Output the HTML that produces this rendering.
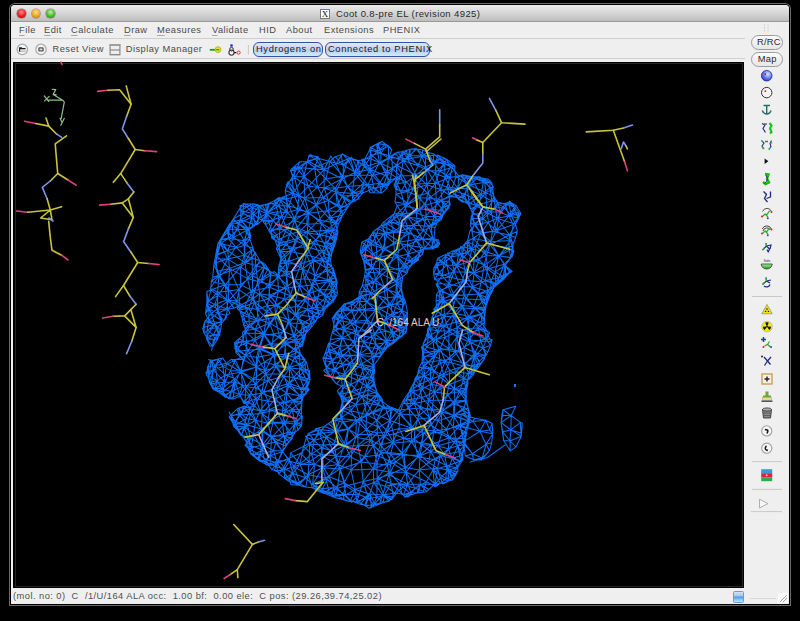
<!DOCTYPE html>
<html><head><meta charset="utf-8">
<style>
html,body{margin:0;padding:0;width:800px;height:621px;overflow:hidden;background:#000;}
body{position:relative;font-family:"Liberation Sans",sans-serif;}
.abs{position:absolute;}
#win{position:absolute;left:11px;top:5px;width:778px;height:599px;background:#efefef;border-radius:4px 4px 0 0;box-shadow:0 0 0 1px #000,0 0 0 2px #6a6a6a;overflow:hidden;}
#title{position:absolute;left:0;top:0;width:778px;height:16px;background:linear-gradient(#ebebeb,#d6d6d6 50%,#bdbdbd);border-bottom:1px solid #9a9a9a;}
.tl{position:absolute;top:4.1px;width:8.8px;height:8.8px;border-radius:50%;box-shadow:0 0 0 0.6px rgba(90,10,10,0.45);}
.txt{position:absolute;white-space:pre;font-size:9.3px;letter-spacing:0.45px;color:#4a4a4a;line-height:12px;}
.menu u{text-decoration:none;background:linear-gradient(#a8a8a8,#a8a8a8) no-repeat 0 100%/calc(100% - 0.45px) 1px;padding-bottom:1px;}
#gl{position:absolute;left:13px;top:61.6px;width:731px;height:526.2px;background:#000;}
.pill{position:absolute;border-radius:6px;border:1px solid #3652a8;background:linear-gradient(#e4e8f8,#c6d2f2 45%,#b4cdf0 55%,#cdeefc);box-sizing:border-box;box-shadow:0 1px 0 #e6e6e6;}
.gbtn{position:absolute;border-radius:8px;border:1px solid #9c9c9c;background:linear-gradient(#fbfbfb,#e6e6e6);box-sizing:border-box;}
</style></head>
<body>
<div id="win">
  <div id="title">
    <div class="tl" style="left:6.3px;background:radial-gradient(circle at 50% 35%,#ff8a8a,#e3141a 60%,#a70d10);"></div>
    <div class="tl" style="left:20.6px;background:radial-gradient(circle at 50% 35%,#ffe08a,#e8a316 60%,#b07010);"></div>
    <div class="tl" style="left:35.2px;background:radial-gradient(circle at 50% 35%,#b8f59a,#3db42a 60%,#267a18);"></div>
  </div>
</div>
<!-- title text -->
<div class="abs" style="left:320px;top:9px;width:10px;height:10px;background:#fff;border:1px solid #777;box-sizing:border-box;font-size:9px;line-height:8px;text-align:center;color:#111;font-family:'Liberation Serif',serif;">X</div>
<div class="txt" style="left:336px;top:7.7px;font-size:9.5px;letter-spacing:0.39px;color:#2a2a2a;">Coot 0.8-pre EL (revision 4925)</div>
<!-- menubar -->
<div class="abs" style="left:11px;top:38px;width:734px;height:1px;background:#cfcfcf;"></div>
<div class="txt menu" style="left:19px;top:24.4px;"><u>F</u>ile</div>
<div class="txt menu" style="left:44px;top:24.4px;"><u>E</u>dit</div>
<div class="txt menu" style="left:71px;top:24.4px;"><u>C</u>alculate</div>
<div class="txt menu" style="left:124px;top:24.4px;"><u>D</u>raw</div>
<div class="txt menu" style="left:157px;top:24.4px;"><u>M</u>easures</div>
<div class="txt menu" style="left:212px;top:24.4px;"><u>V</u>alidate</div>
<div class="txt menu" style="left:259px;top:24.4px;">HID</div>
<div class="txt menu" style="left:286px;top:24.4px;">About</div>
<div class="txt menu" style="left:324px;top:24.4px;">Extensions</div>
<div class="txt menu" style="left:383px;top:24.4px;">PHENIX</div>
<!-- toolbar -->
<!-- toolbar items -->
<svg class="abs" style="left:0;top:38px" width="250" height="22" viewBox="0 38 250 22">
 <g fill="none">
  <circle cx="22.3" cy="49.4" r="5.2" stroke="#a8a8a8" stroke-width="1.2" fill="#f4f4f4"/>
  <path d="M19 47.2h2.5l0.8 0.9h3.2v3.6h-6.5z" fill="#222"/>
  <path d="M20.2 49.2h5.8v2.6h-5.8z" fill="#ddd"/>
  <circle cx="41" cy="49.4" r="5.2" stroke="#a8a8a8" stroke-width="1.2" fill="#f4f4f4"/>
  <rect x="38.3" y="47.2" width="5.4" height="4.4" rx="1.2" fill="#555"/>
  <rect x="39.6" y="48.5" width="2.8" height="1.8" fill="#ddd"/>
  <rect x="109.5" y="44.2" width="11" height="11.2" fill="#8a8a8a"/>
  <rect x="110.7" y="45.8" width="8.6" height="3.6" fill="#eee"/>
  <rect x="110.7" y="50.6" width="8.6" height="3.4" fill="#eee"/>
  <rect x="109.5" y="44.2" width="11" height="1.6" fill="#a0a0a0"/>
  <path d="M209.8 49.8h5.5" stroke="#17a017" stroke-width="1.8"/>
  <circle cx="218" cy="49.6" r="2.9" fill="#e8e020" stroke="#b0a810" stroke-width="0.8"/>
  <path d="M216.2 49.7h3" stroke="#17a017" stroke-width="1.2"/>
  <rect x="230.3" y="44.4" width="2.4" height="2.2" fill="#1020e0"/>
  <circle cx="231.5" cy="49.2" r="1.8" stroke="#333" stroke-width="1"/>
  <circle cx="231.5" cy="52.6" r="2.6" stroke="#333" stroke-width="1.1"/>
  <path d="M234.2 52.6h2.2" stroke="#111" stroke-width="1.2"/>
  <circle cx="238.6" cy="52.6" r="1.6" stroke="#d33" stroke-width="1"/>
  <path d="M248.4 45v9.5" stroke="#c8c8c8" stroke-width="1"/>
 </g>
</svg>
<div class="txt" style="left:52.5px;top:43.2px;">Reset View</div>
<div class="txt" style="left:125.8px;top:43.2px;">Display Manager</div>
<div class="pill" style="left:253px;top:42px;width:70px;height:15px;"></div>
<div class="txt" style="left:256px;top:43.2px;color:#1a1a1a;letter-spacing:0.65px;">Hydrogens on</div>
<div class="pill" style="left:325px;top:42px;width:105px;height:15px;"></div>
<div class="txt" style="left:328px;top:43.2px;color:#1a1a1a;letter-spacing:0.65px;">Connected to PHENIX</div>

<div class="abs" style="left:11px;top:58px;width:734px;height:1px;background:#cfcfcf;"></div>
<div id="gl"></div>
<div class="abs" style="left:14.6px;top:62.8px;width:728.4px;height:524px;box-sizing:border-box;border:1px solid #242424;"></div>
<svg class="abs" style="left:0;top:0" width="800" height="621" viewBox="0 0 800 621"><g fill="none" stroke-linecap="round" stroke-linejoin="round"><path d="M287.5 385.5L284.1 376.3M401.6 288.8L401.5 288.0M423.2 343.7L422.4 354.1M402.4 213.8L398.7 222.6M263.7 333.8L245.6 332.9M427.1 409.4L441.3 412.1M366.9 386.3L374.6 386.3M227.7 250.6L229.5 268.4M292.8 473.4L297.2 483.8M423.9 248.8L432.9 249.0M344.0 387.4L340.2 394.2M426.5 481.7L423.3 491.3M468.6 421.0L463.0 410.0M457.8 188.3L467.3 188.6M444.0 262.9L437.3 259.3M350.6 355.6L353.6 365.6M432.9 249.0L439.8 244.4M464.4 443.1L462.1 455.3M472.5 286.8L487.9 291.4M450.5 359.3L443.7 375.6M299.9 344.2L303.8 337.7M442.1 275.8L444.0 262.9M498.9 256.1L510.5 240.5M326.0 247.3L334.3 241.6M406.0 472.1L389.7 472.3M311.8 285.1L302.8 268.9M275.7 204.8L274.4 200.6M461.8 247.3L464.3 247.0M380.9 153.3L391.5 156.5M406.0 472.1L390.7 461.8M466.4 401.4L463.0 410.0M309.2 389.8L307.3 386.8M235.4 382.3L240.0 396.2M252.5 298.8L238.8 289.6M401.9 494.1L405.8 497.1M366.0 429.9L355.8 437.3M401.9 453.8L414.2 438.9M362.6 396.0L350.6 410.8M446.8 465.9L445.9 478.6M287.4 212.4L275.7 204.8M218.4 359.4L222.9 366.4M472.5 286.8L466.1 298.9M443.7 375.6L439.9 360.4M217.6 292.2L228.4 290.9M255.8 265.5L261.7 261.8M330.4 339.4L342.7 337.9M432.4 238.6L423.9 248.8M214.7 324.2L204.8 321.5M217.6 308.9L207.2 303.4M432.0 247.2L432.9 249.0M370.9 244.5L362.8 246.2M362.6 396.0L377.0 392.1M303.6 446.3L290.6 452.9M371.1 265.6L379.3 272.9M246.5 230.5L233.5 237.4M253.6 433.9L244.0 426.7M213.3 369.9L225.1 382.3M291.0 251.6L289.0 261.3M246.0 418.6L233.6 426.3M240.5 371.1L246.2 386.5M314.7 297.6L311.8 285.1M459.0 451.8L460.7 461.0M399.4 414.1L418.7 415.2M370.1 169.2L371.4 154.9M487.9 291.4L487.7 298.2M322.4 488.8L324.8 492.0M328.8 348.6L329.8 344.8M401.6 310.5L404.6 317.2M209.9 381.6L212.4 388.2M246.7 342.8L238.9 338.8M344.0 387.4L351.9 391.8M402.8 276.7L407.1 273.0M240.9 412.9L246.0 418.6M397.6 256.4L399.9 242.0M364.5 456.8L373.3 469.0M491.0 211.9L479.2 204.5M324.2 188.1L308.4 186.3M380.2 226.5L378.4 228.6M343.9 408.1L340.7 418.4M401.9 494.1L399.6 483.8M287.0 272.0L302.8 268.9M269.5 231.9L279.9 228.1M298.4 347.2L302.9 344.0M399.4 414.1L403.3 403.4M277.3 246.8L275.3 240.4M480.7 232.9L472.0 231.4M415.8 239.4L408.2 227.9M238.6 429.8L241.7 435.3M377.8 307.9L367.5 302.2M373.4 401.5L382.2 399.1M323.2 466.7L322.8 456.4M359.5 354.8L347.8 347.3M442.2 290.8L436.7 283.6M515.4 212.5L508.9 216.0M504.1 264.3L511.0 257.4M241.7 435.3L245.9 440.9M483.9 329.1L469.8 332.2M358.8 309.7L370.9 323.3M435.3 183.3L427.4 170.4M245.6 332.9L245.0 328.1M460.7 461.0L462.1 455.3M277.7 211.7L275.7 204.8M207.2 303.4L211.2 313.5M331.4 281.1L337.3 282.3M299.3 484.3L297.2 483.8M257.8 281.4L263.8 267.9M399.6 483.8L415.1 488.2M269.6 295.2L267.2 305.4M518.9 216.6L519.0 212.8M499.9 211.9L505.1 203.9M286.8 199.0L287.4 212.4M292.3 408.9L302.0 401.0M380.9 153.3L369.7 149.7M252.5 298.8L247.5 278.6M380.9 153.3L386.5 145.2M441.3 412.1L428.7 400.4M318.1 156.8L308.9 155.5M430.8 384.2L434.5 371.1M452.1 476.3L452.3 480.0M371.4 154.9L364.4 160.1M401.9 453.8L403.9 438.3M326.0 247.3L330.5 255.4M318.6 310.8L318.4 316.3M295.4 300.9L295.6 314.6M484.5 299.9L487.7 298.2M414.3 403.5L428.7 400.4M265.8 220.6L265.5 224.6M456.1 440.7L464.4 443.1M289.8 234.2L279.3 239.3M439.3 242.9L439.8 244.4M483.3 218.7L471.7 218.2M295.1 432.5L301.3 426.3M436.5 202.0L447.1 187.0M259.1 210.6L263.2 221.8M462.1 254.8L469.2 261.8M271.0 343.7L285.6 344.1M437.6 311.6L438.9 303.5M252.5 298.8L239.5 305.7M402.4 213.8L408.0 204.0M473.3 238.6L467.3 241.1M336.1 163.9L342.4 153.9M448.9 331.2L457.5 327.5M377.8 307.9L358.8 309.7M226.1 309.6L228.5 300.6M304.0 359.8L306.4 362.2M376.9 419.9L387.5 431.7M417.2 375.8L418.9 371.9M343.9 304.0L346.6 303.2M301.0 368.9L306.9 381.2M276.3 366.4L265.4 370.8M322.5 259.2L326.0 247.3M244.9 262.6L244.7 245.2M360.4 296.0L352.5 301.3M430.9 425.2L415.0 429.1M385.4 298.1L391.4 305.6M485.5 251.5L498.9 256.1M481.1 314.6L484.5 319.1M399.8 337.0L392.7 343.9M386.5 342.5L388.0 345.1M430.8 384.2L443.7 375.6M324.2 188.1L342.2 178.8M284.5 354.4L285.6 344.1M387.0 233.5L383.0 248.5M493.6 187.3L490.0 182.3M408.3 254.0L413.2 260.8M466.4 401.4L454.9 401.0M297.5 209.8L287.4 212.4M306.9 224.3L294.7 220.8M483.9 329.1L476.3 323.9M343.1 327.3L355.8 330.7M305.7 477.8L297.2 483.8M354.8 172.8L358.1 160.5M370.9 244.5L368.0 239.2M383.9 285.9L379.3 272.9M225.1 382.3L222.9 366.4M454.8 194.3L456.2 197.3M415.1 488.2L423.3 491.3M348.3 400.8L362.6 396.0M282.7 451.7L270.5 455.6M401.5 288.0L401.7 284.5M358.6 380.7L363.7 368.6M250.3 408.7L246.0 418.6M292.8 473.4L284.8 468.5M213.6 389.5L212.4 388.2M308.3 369.6L309.2 375.2M343.1 327.3L338.2 320.4M427.6 329.1L428.7 336.1M430.9 425.2L418.7 415.2M255.8 265.5L263.8 267.9M264.1 391.3L267.8 401.0M474.4 370.6L468.8 373.6M414.3 403.5L407.2 398.7M237.0 429.6L238.6 429.8M404.2 299.7L402.9 295.7M279.3 239.3L275.3 240.4M217.6 308.9L228.5 300.6M363.1 259.9L361.4 254.9M372.6 254.3L365.2 248.8M369.7 494.0L357.0 503.0M211.7 383.6L212.4 388.2M380.3 444.9L377.3 432.9M375.9 344.3L381.8 353.6M333.6 487.4L324.8 492.0M218.0 338.6L218.3 333.9M292.3 408.9L283.6 402.5M421.3 250.1L408.3 254.0M282.7 451.7L289.5 461.1M325.3 309.3L328.3 302.6M371.3 505.3L379.6 503.4M271.4 272.2L263.8 267.9M373.7 282.8L368.4 272.3M315.1 275.5L310.3 263.0M287.6 432.5L271.5 437.5M292.8 473.4L289.5 461.1M289.5 461.1L290.6 452.9M385.3 331.2L386.5 342.5M351.0 470.0L373.3 469.0M314.7 297.6L305.3 300.6M204.3 327.3L204.1 333.3M442.1 275.8L449.3 284.2M514.5 207.0L505.1 203.9M277.8 305.6L295.6 314.6M238.4 223.3L233.5 237.4M359.5 354.8L350.6 355.6M282.7 451.7L278.5 460.4M434.2 216.4L425.5 205.2M475.3 308.7L462.6 307.9M421.7 156.1L422.8 149.9M259.1 210.6L266.9 213.4M486.5 339.1L469.8 332.2M217.6 308.9L211.2 313.5M474.5 223.3L472.0 231.4M366.9 386.3L377.0 392.1M433.0 469.8L445.9 478.6M292.8 473.4L289.7 479.4M295.6 314.6L305.3 300.6M418.1 184.1L417.2 195.7M392.6 168.8L400.5 176.1M435.3 183.3L436.5 202.0M489.9 187.9L491.9 201.0M455.9 371.4L454.3 389.4M423.3 230.6L431.4 226.6M404.6 317.2L407.5 312.9M273.0 220.2L277.7 211.7M260.0 410.7L255.8 398.9M373.4 401.5L383.3 407.2M418.1 184.1L427.7 193.3M319.0 427.7L308.8 433.4M310.3 323.9L313.2 322.2M399.6 483.8L395.1 493.0M260.0 410.7L267.8 401.0M340.5 208.3L335.9 192.1M232.0 224.1L233.5 237.4M231.1 416.2L229.2 412.0M421.3 250.1L422.7 254.0M253.3 378.9L256.2 367.2M292.3 408.9L285.2 423.1M294.7 220.8L297.5 209.8M299.0 195.7L297.5 209.8M335.3 315.5L334.5 318.6M289.0 261.3L302.8 268.9M220.4 240.3L233.5 237.4M486.5 339.1L483.0 347.9M313.8 243.5L322.5 259.2M421.7 156.1L433.4 162.0M332.7 229.9L336.1 225.3M454.2 415.2L453.4 427.0M266.9 213.4L265.4 204.4M245.6 355.5L256.2 367.2M485.5 251.5L490.8 241.7M301.0 368.9L304.0 359.8M443.7 375.6L434.5 371.1M285.9 288.2L295.4 300.9M486.5 339.1L490.5 345.5M364.4 160.1L358.1 160.5M363.2 183.3L354.8 172.8M333.6 487.4L344.1 482.7M479.4 176.7L471.3 176.5M508.3 202.8L505.1 203.9M387.5 431.7L380.3 444.9M508.9 216.0L514.5 207.0M427.4 170.4L439.7 171.0M209.9 381.6L211.7 383.6M303.8 395.0L302.0 401.0M291.0 251.6L281.9 259.9M421.3 250.1L413.2 260.8M402.8 276.7L401.7 284.5M340.7 418.4L340.1 410.4M288.8 481.2L297.2 483.8M358.8 309.7L367.5 302.2M407.1 273.0L407.4 271.3M271.5 437.5L270.5 455.6M380.2 226.5L383.1 222.7M376.9 419.9L392.4 408.5M319.3 234.8L321.6 223.6M300.8 354.2L298.4 347.2M366.5 240.7L362.8 246.2M474.0 356.8L464.7 363.5M269.6 295.2L284.0 298.8M255.1 254.4L253.0 248.2M401.6 310.5L404.2 299.7M244.9 262.6L255.1 254.4M418.1 184.1L427.4 170.4M362.8 246.2L361.4 254.9M287.6 432.5L283.7 442.2M366.6 414.6L383.3 407.2M462.1 254.8L451.3 257.0M373.3 365.4L371.6 353.1M308.4 186.3L316.1 204.7M330.0 236.9L319.3 234.8M386.8 176.2L392.6 168.8M461.8 247.3L453.4 251.0M301.3 167.7L307.7 160.8M227.2 230.7L232.0 224.1M338.0 464.6L328.9 476.4M441.3 412.1L453.4 427.0M366.6 414.6L366.0 429.9M260.0 410.7L269.6 409.8M378.4 143.8L386.5 145.2M286.8 199.0L285.2 190.6M399.1 270.6L404.4 264.2M289.0 261.3L306.5 254.9M268.2 380.4L264.1 391.3M371.4 154.9L369.7 149.7M205.7 320.3L204.8 321.5M439.7 171.0L433.4 162.0M454.0 316.6L462.6 307.9M299.0 195.7L316.1 204.7M445.7 254.4L438.4 257.8M255.8 420.2L262.8 431.5M484.5 299.9L486.0 307.4M235.4 382.3L246.2 386.5M307.3 211.4L321.6 223.6M486.5 339.1L492.0 339.6M483.3 218.7L479.2 204.5M352.3 193.4L335.9 192.1M213.6 389.5L222.9 391.9M273.0 220.2L265.8 220.6M446.8 465.9L444.4 454.4M235.4 359.9L240.5 371.1M330.0 236.9L326.0 247.3M454.0 316.6L457.5 327.5M459.0 451.8L463.7 445.6M273.0 220.2L279.9 228.1M291.0 251.6L306.5 254.9M401.6 310.5L405.3 301.1M323.4 294.6L314.7 297.6M435.3 183.3L439.7 171.0M432.0 247.2L439.3 242.9M311.8 307.8L305.3 300.6M382.9 495.1L374.5 503.8M504.1 264.3L487.8 269.0M417.2 375.8L419.0 367.8M248.6 308.1L256.8 320.9M410.8 494.1L405.8 497.1M299.3 231.6L303.6 244.1M218.9 276.3L216.7 271.4M387.0 233.5L376.3 235.9M294.9 340.3L296.0 350.8M427.7 193.3L417.2 195.7M385.3 331.2L374.6 333.8M267.8 423.2L262.8 431.5M204.8 321.5L202.7 328.6M331.3 293.4L333.3 302.3M344.0 387.4L339.8 393.5M498.9 256.1L511.0 257.4M262.4 450.0L253.8 454.8M455.9 371.4L468.8 373.6M465.2 272.0L474.0 273.2M453.0 307.2L444.2 316.5M295.1 432.5L294.8 423.9M396.2 281.2L383.9 285.9M342.7 337.9L355.8 330.7M511.0 257.4L512.5 248.4M465.5 242.8L464.3 247.0M418.7 415.2L415.0 429.1M363.2 183.3L360.8 190.8M295.4 240.8L291.0 251.6M383.3 407.2L382.2 399.1M324.0 169.7L318.1 156.8M235.4 382.3L240.5 371.1M350.1 158.1L342.4 153.9M311.8 307.8L312.9 316.9M369.7 494.0L355.2 489.5M213.4 340.0L206.3 336.6M280.7 251.6L281.9 259.9M343.9 408.1L340.1 410.4M287.6 432.5L294.8 423.9M328.9 476.4L333.6 487.4M342.7 337.9L329.8 344.8M454.9 401.0L463.0 410.0M294.6 177.8L288.7 182.0M430.9 425.2L423.9 433.2M232.0 224.1L231.7 221.4M427.1 334.9L423.2 343.7M449.7 196.4L447.1 187.0M285.2 423.1L294.8 423.9M422.7 254.0L423.9 248.8M356.4 420.2L348.3 428.4M255.8 398.9L246.2 386.5M342.5 310.5L343.9 304.0M457.2 336.6L469.8 332.2M387.5 431.7L392.4 408.5M371.1 265.6L365.5 257.9M284.5 354.4L273.3 354.2M311.8 307.8L314.7 297.6M435.3 459.7L444.4 454.4M299.3 231.6L294.7 220.8M243.2 314.9L256.8 320.9M299.9 464.2L305.7 477.8M306.9 381.2L307.3 386.8M235.4 382.3L232.9 398.9M472.5 286.8L485.3 280.6M514.5 207.0L509.8 201.4M263.7 333.8L279.5 336.6M452.1 476.3L445.9 478.6M399.8 337.0L405.6 332.5M244.7 245.2L253.0 248.2M487.8 269.0L479.2 259.9M282.1 413.7L285.2 423.1M406.2 332.5L399.9 337.3M489.9 187.9L490.0 182.3M370.2 147.4L369.7 149.7M489.9 187.9L481.0 195.1M408.2 227.9L398.7 222.6M296.0 166.8L294.0 170.3M269.1 203.3L265.4 204.4M238.8 289.6L228.4 290.9M427.6 329.1L437.9 330.7M442.1 275.8L436.4 266.6M345.0 374.4L353.6 365.6M386.8 176.2L380.8 163.2M413.2 175.6L418.3 165.8M442.1 432.2L456.1 440.7M330.0 236.9L334.3 241.6M413.4 383.5L409.8 390.0M421.7 156.1L427.4 170.4M373.7 282.8L370.7 293.4M258.8 347.5L273.3 354.2M444.0 262.9L438.4 257.8M240.9 412.9L250.3 408.7M390.5 182.3L388.4 185.4M385.3 331.2L394.2 333.2M360.8 190.8L362.8 193.1M441.6 219.3L443.9 212.1M257.8 281.4L252.5 298.8M450.5 359.3L439.9 360.4M249.2 326.8L245.0 328.1M401.9 453.8L393.1 441.8M380.2 226.5L386.8 223.2M341.6 307.2L337.9 312.0M335.3 315.5L337.9 312.0M463.1 177.9L471.3 176.5M340.7 418.4L335.0 431.3M444.6 163.9L452.9 165.7M474.0 356.8L458.8 351.0M359.5 354.8L373.3 365.4M434.5 486.1L426.5 481.7M400.5 176.1L389.9 180.6M332.7 229.9L338.0 231.9M362.6 396.0L351.9 391.8M380.9 153.3L380.8 163.2M354.2 341.0L355.8 330.7M233.6 426.3L238.6 429.8M483.3 218.7L472.2 212.3M343.9 408.1L342.2 402.1M431.4 226.6L426.1 216.6M399.6 483.8L385.2 486.2M206.3 336.6L218.3 333.9M451.3 257.0L445.7 254.4M295.4 240.8L299.3 231.6M481.0 195.1L471.7 178.7M314.6 464.5L322.8 456.4M253.3 378.9L268.2 380.4M370.1 169.2L386.8 176.2M333.1 249.7L335.7 242.3M404.2 299.7L391.4 305.6M446.8 465.9L460.7 461.0M314.3 440.6L308.8 433.4M365.9 285.1L364.4 288.6M288.8 481.2L289.7 479.4M246.2 386.5L244.8 402.4M401.6 288.8L401.7 284.5M414.1 390.9L422.5 388.9M355.2 489.5L350.6 500.5M468.4 413.8L468.2 408.1M329.4 218.4L332.7 229.9M239.5 305.7L228.5 300.6M427.1 409.4L414.3 403.5M373.9 188.3L380.1 192.7M366.9 386.3L372.9 380.9M396.1 194.0L408.0 204.0M328.9 476.4L322.4 488.8M414.3 403.5L414.1 390.9M343.9 408.1L348.3 400.8M425.5 205.2L417.2 195.7M306.9 381.2L309.2 375.2M373.9 188.3L362.8 193.1M464.4 443.1L463.7 445.6M294.9 340.3L298.4 347.2M279.7 199.3L287.4 212.4M311.6 454.1L303.6 446.3M336.4 383.8L332.3 378.2M255.8 398.9L264.1 391.3M235.4 382.3L222.9 391.9M279.7 199.3L279.0 197.5M461.8 247.3L457.7 250.1M438.9 350.6L439.9 360.4M244.9 262.6L229.5 268.4M441.5 208.1L449.4 200.9M416.4 212.8L417.0 221.9M231.1 416.2L233.6 426.3M258.1 309.5L267.2 305.4M455.6 298.6L462.6 307.9M427.1 409.4L428.7 400.4M283.6 402.5L269.6 409.8M427.6 329.1L427.1 334.9M470.6 416.4L468.2 408.1M454.2 271.7L451.3 257.0M457.2 336.6L457.5 327.5M277.8 305.6L269.6 295.2M283.6 402.5L282.1 413.7M489.6 332.6L486.5 339.1M427.4 170.4L433.4 162.0M365.2 330.9L370.9 323.3M454.2 271.7L442.1 275.8M251.6 217.2L242.9 213.4M459.0 451.8L462.1 455.3M264.1 391.3L276.1 391.3M399.1 231.9L399.9 242.0M450.3 204.7L449.4 200.9M240.9 412.9L244.4 406.1M399.9 326.7L383.9 321.4M253.3 378.9L246.2 386.5M248.6 308.1L252.5 298.8M352.3 193.4L342.2 178.8M253.6 433.9L251.5 445.8M417.7 456.8L430.8 451.5M252.7 227.4L257.3 223.4M299.0 195.7L294.6 177.8M398.0 152.0L402.1 151.7M230.4 370.4L235.4 382.3M249.2 326.8L245.2 321.5M296.0 350.8L298.4 347.2M448.9 331.2L437.9 330.7M377.8 307.9L383.9 321.4M323.2 466.7L328.9 476.4M457.8 188.3L454.8 194.3M380.2 226.5L373.5 231.4M248.5 229.7L250.3 236.9M322.5 259.2L310.3 263.0M334.6 237.7L338.0 231.9M300.9 389.5L302.1 397.1M455.6 298.6L460.3 286.6M313.8 243.5L306.5 254.9M433.0 469.8L426.5 481.7M328.9 476.4L344.1 482.7M440.2 483.3L435.5 486.8M389.7 472.3L373.3 469.0M397.2 205.6L408.0 204.0M434.5 371.1L425.0 376.4M425.5 205.2L426.1 216.6M334.5 318.6L333.3 329.5M483.3 218.7L480.7 232.9M453.0 307.2L455.6 298.6M490.8 241.7L496.4 230.8M335.9 330.3L333.3 329.5M380.9 153.3L371.4 154.9M301.3 167.7L324.0 169.7M282.7 451.7L287.2 444.0M326.0 247.3L319.3 234.8M377.8 307.9L370.9 323.3M490.8 241.7L510.5 240.5M356.4 420.2L340.7 418.4M314.3 440.6L303.6 446.3M370.4 440.1L376.9 455.2M452.1 476.3L458.0 470.9M334.7 371.3L326.6 366.6M280.7 251.6L277.3 246.8M233.3 219.0L239.7 208.9M485.5 251.5L471.8 249.2M329.4 218.4L316.1 204.7M244.0 426.7L238.6 429.8M253.3 378.9L240.5 371.1M459.0 451.8L444.4 454.4M270.3 464.0L270.5 455.6M311.6 454.1L321.3 447.6M232.0 224.1L232.6 220.2M303.8 395.0L308.8 389.5M294.6 357.6L296.0 350.8M337.2 221.7L343.1 214.7M441.5 208.1L443.9 212.1M439.3 242.9L438.6 240.1M358.8 309.7L350.6 322.5M374.5 371.5L374.2 365.5M322.4 488.8L312.5 484.7M359.5 354.8L363.7 368.6M515.4 212.5L518.9 216.6M301.0 368.9L289.6 368.0M457.2 336.6L448.8 348.8M379.3 272.9L379.8 259.4M465.6 432.1L465.1 431.4M355.5 201.0L362.8 193.1M245.6 355.5L240.5 371.1M408.2 227.9L423.3 230.6M244.7 245.2L233.5 237.4M392.6 168.8L389.9 180.6M273.3 354.2L256.6 357.3M326.4 370.8L332.3 378.2M417.2 375.8L413.4 383.5M304.0 359.8L300.9 355.8M222.9 391.9L228.3 398.4M420.9 444.5L414.2 438.9M343.9 304.0L341.6 307.2M416.4 212.8L426.1 216.6M399.9 326.7L399.8 337.0M239.6 310.1L242.1 317.9M251.6 217.2L252.1 207.1M262.4 450.0L264.5 462.1M408.2 227.9L399.9 242.0M386.5 342.5L392.7 343.9M307.7 160.8L324.0 169.7M269.5 231.9L269.0 230.7M370.2 147.4L377.3 143.6M227.7 250.6L216.2 255.6M450.3 204.7L443.9 212.1M499.0 277.8L485.3 280.6M496.7 285.2L504.8 275.9M491.9 201.0L495.6 199.4M366.9 386.3L351.9 391.8M269.1 203.3L274.4 200.6M466.4 400.3L465.8 393.1M399.1 270.6L386.6 265.5M214.7 324.2L211.2 313.5M238.8 289.6L247.5 278.6M436.7 283.6L439.6 291.5M337.9 353.8L342.3 363.8M354.8 172.8L350.1 158.1M250.3 408.7L244.4 406.1M364.5 456.8L351.8 450.4M489.6 332.6L483.9 329.1M415.0 429.1L399.1 428.4M233.3 219.0L238.4 223.3M267.8 423.2L255.8 420.2M395.9 296.7L401.6 288.8M373.7 282.8L379.3 272.9M311.6 454.1L299.9 464.2M449.8 205.0L449.4 200.9M474.0 356.8L474.3 367.6M383.2 185.9L388.4 185.4M370.4 440.1L380.3 444.9M386.8 223.2L393.3 219.0M253.6 433.9L262.8 431.5M259.7 293.8L269.6 295.2M447.1 187.0L454.8 194.3M238.8 289.6L239.5 305.7M363.1 259.9L365.5 257.9M394.2 333.2L392.7 343.9M399.1 270.6L407.1 273.0M453.0 307.2L462.6 307.9M353.2 304.4L346.6 303.2M448.9 331.2L436.0 339.7M472.2 212.3L470.7 209.0M393.1 441.8L386.7 452.4M491.0 211.9L497.9 202.3M287.2 444.0L293.0 435.9M448.8 348.8L436.0 339.7M314.3 440.6L321.3 447.6M213.4 340.0L218.0 338.6M377.8 307.9L370.7 293.4M479.9 360.6L478.2 364.4M213.6 389.5L225.1 382.3M499.9 211.9L497.9 202.3M470.8 342.7L469.8 332.2M320.4 490.9L324.8 492.0M240.0 396.2L232.9 398.9M218.9 276.3L228.4 290.9M392.6 168.8L380.8 163.2M444.4 454.4L437.9 445.8M348.3 400.8L342.4 401.0M438.9 350.6L426.6 346.9M251.6 217.2L257.3 223.4M329.4 218.4L340.5 208.3M361.4 164.7L364.4 160.1M354.2 341.0L342.7 337.9M340.2 394.2L351.9 391.8M337.9 353.8L347.8 347.3M415.8 239.4L399.9 242.0M314.3 440.6L319.4 429.4M255.8 398.9L244.8 402.4M445.1 161.6L439.1 158.6M332.3 362.0L342.3 363.8M428.3 362.2L423.5 367.0M340.7 418.4L350.6 410.8M406.2 332.5L406.6 328.6M435.3 459.7L446.8 465.9M294.9 340.3L299.9 344.2M371.1 265.6L372.6 254.3M468.4 413.8L470.6 416.4M285.9 288.2L269.6 295.2M287.0 272.0L278.3 269.8M300.8 333.5L307.5 329.5M463.7 197.8L454.8 194.3M392.1 315.8L383.9 321.4M422.4 354.1L423.8 357.2M345.0 374.4L336.4 383.8M279.5 336.6L285.6 344.1M273.0 220.2L266.9 213.4M409.6 155.4L416.6 149.1M470.8 342.7L483.0 347.9M399.4 414.1L415.0 429.1M474.5 223.3L471.7 218.2M442.5 400.0L454.3 389.4M420.9 444.5L437.9 445.8M408.5 268.8L407.1 273.0M431.1 324.0L427.6 329.1M332.3 362.0L334.7 371.3M342.2 402.1L339.8 393.5M322.5 259.2L327.6 263.8M364.4 288.6L360.4 296.0M271.5 437.5L285.2 423.1M373.4 401.5L377.2 395.4M416.4 212.8L408.0 204.0M227.2 230.7L227.6 232.0M421.3 250.1L423.9 248.8M481.0 195.1L469.4 203.7M435.3 183.3L427.7 193.3M407.8 191.4L395.9 189.6M312.5 484.7L320.4 490.9M463.1 177.9L458.8 176.1M491.9 201.0L497.9 202.3M246.5 230.5L249.9 239.3M489.9 187.9L483.8 179.4M389.7 472.3L373.7 482.6M400.5 176.1L395.9 189.6M393.3 219.0L394.1 213.7M314.6 464.5L312.5 484.7M395.1 493.0L385.2 486.2M329.4 218.4L337.2 221.7M333.1 249.7L330.5 255.4M441.5 208.1L434.2 216.4M483.9 329.1L486.5 339.1M370.4 440.1L355.8 437.3M308.4 186.3L324.0 169.7M449.8 205.0L443.9 212.1M299.0 195.7L308.4 186.3M369.7 494.0L373.7 482.6M490.5 345.5L487.5 352.5M475.3 308.7L486.0 307.4M252.7 227.4L248.5 229.7M340.7 418.4L333.7 418.1M396.1 194.0L395.9 189.6M403.3 403.4L407.1 399.0M442.1 432.2L437.9 445.8M487.8 269.0L485.3 280.6M332.3 362.0L325.0 360.7M499.9 211.9L496.4 230.8M490.8 241.7L473.3 238.6M312.9 316.9L318.4 316.3M401.9 494.1L410.8 494.1M404.4 264.2L413.2 260.8M359.5 354.8L353.6 365.6M415.9 148.5L416.6 149.1M366.0 429.9L377.3 432.9M294.9 340.3L303.8 337.7M433.8 153.9L433.4 162.0M373.3 365.4L374.5 371.5M471.7 178.7L479.4 176.7M351.0 470.0L351.8 450.4M377.8 307.9L391.4 305.6M315.1 275.5L322.5 259.2M324.2 188.1L324.0 169.7M352.3 193.4L352.8 201.7M245.9 440.9L247.8 448.0M251.6 217.2L252.7 227.4M448.9 331.2L454.0 316.6M371.6 353.1L381.8 353.6M462.1 455.3L463.7 445.6M351.0 470.0L344.1 482.7M403.3 160.7L400.5 176.1M253.6 433.9L248.1 438.6M382.9 495.1L379.6 503.4M403.9 438.3L414.2 438.9M248.6 308.1L258.1 309.5M519.0 212.8L514.5 207.0M286.8 199.0L279.0 197.5M332.4 379.2L332.3 378.2M423.5 367.0L425.0 376.4M370.9 244.5L365.2 248.8M432.4 238.6L438.6 240.1M395.1 493.0L390.1 499.1M448.8 348.8L450.5 359.3M244.0 426.7L233.6 426.3M427.7 193.3L425.5 205.2M338.0 464.6L333.1 451.2M377.8 307.9L385.4 298.1M433.0 469.8L446.8 465.9M306.6 437.2L308.8 433.4M285.9 288.2L279.5 276.9M294.6 357.6L304.0 359.8M368.4 272.3L379.3 272.9M299.3 231.6L319.3 234.8M270.5 455.6L264.5 462.1M332.1 495.1L335.7 496.0M485.3 280.6L494.3 284.1M283.6 402.5L276.1 391.3M432.4 238.6L439.3 242.9M463.1 177.9L471.7 178.7M408.5 268.8L413.2 260.8M419.0 367.8L418.9 371.9M277.7 211.7L266.9 213.4M375.9 344.3L383.0 350.1M505.4 274.0L504.8 275.9M266.9 213.4L262.2 205.0M337.9 353.8L350.6 355.6M305.7 477.8L292.8 473.4M251.5 445.8L245.9 440.9M396.2 281.2L401.7 284.5M445.9 478.6L440.2 483.3M279.5 336.6L289.4 322.9M315.5 159.1L318.1 156.8M222.9 391.9L222.3 393.7M410.8 494.1L408.3 496.8M343.1 327.3L335.9 330.3M456.1 440.7L465.6 432.1M377.2 395.4L362.6 396.0M248.6 308.1L239.6 310.1M331.3 293.4L334.4 291.1M358.6 380.7L345.0 374.4M278.5 473.7L284.5 478.2M352.5 301.3L346.6 303.2M444.6 163.9L439.7 171.0M303.6 244.1L306.5 254.9M498.9 256.1L512.5 248.4M391.5 156.5L392.6 168.8M258.8 347.5L271.0 343.7M494.3 284.1L491.9 292.5M308.3 369.6L306.4 362.2M311.8 307.8L295.6 314.6M370.4 440.1L351.8 450.4M448.8 348.8L438.9 350.6M353.2 304.4L358.8 309.7M479.2 204.5L481.0 195.1M335.8 287.8L337.3 282.3M474.4 370.6L474.3 367.6M257.5 458.1L264.5 462.1M233.3 219.0L231.7 221.4M473.3 374.8L478.2 364.4M289.4 322.9L302.7 323.5M436.7 283.6L436.0 284.0M423.4 353.0L426.6 346.9M444.3 300.9L438.9 303.5M288.7 182.0L285.2 190.6M496.4 230.8L480.7 232.9M307.3 211.4L294.7 220.8M291.0 251.6L280.7 251.6M245.6 355.5L236.5 347.5M340.5 208.3L345.3 198.8M342.3 363.8L353.6 365.6M287.5 385.5L302.1 397.1M408.3 254.0L397.6 256.4M235.4 382.3L225.1 382.3M210.2 288.3L218.9 276.3M413.2 175.6L407.8 191.4M454.2 271.7L444.0 262.9M473.3 238.6L471.8 249.2M449.8 205.0L450.3 204.7M313.8 243.5L299.3 231.6M386.8 223.2L394.1 213.7M399.8 337.0L394.2 333.2M383.0 248.5L379.8 259.4M442.1 432.2L441.3 412.1M382.2 399.1L377.0 392.1M275.1 317.4L266.5 318.7M352.8 201.7L350.5 203.0M485.5 251.5L479.2 259.9M232.0 224.1L227.6 232.0M395.9 296.7L402.9 295.7M372.6 254.3L379.8 259.4M353.2 304.4L352.5 301.3M299.5 286.5L285.9 288.2M220.4 240.3L227.6 232.0M287.5 385.5L276.1 391.3M307.7 160.8L308.9 155.5M423.4 353.0L423.2 343.7M348.3 428.4L340.7 418.4M462.1 254.8L464.3 247.0M294.6 357.6L284.5 354.4M261.7 261.8L265.1 267.6M444.2 316.5L437.6 311.6M331.4 281.1L311.8 285.1M343.8 445.7L333.1 451.2M273.0 220.2L269.0 230.7M302.7 323.5L295.6 314.6M284.8 468.5L276.7 467.0M463.0 410.0L468.2 408.1M444.4 454.4L460.7 461.0M399.4 414.1L414.3 403.5M468.6 421.0L453.4 427.0M347.6 159.1L350.1 158.1M240.0 396.2L244.8 402.4M243.2 314.9L239.6 310.1M348.3 400.8L350.6 410.8M251.6 217.2L248.5 229.7M218.9 276.3L217.6 292.2M302.0 422.6L301.3 417.2M428.3 362.2L439.9 360.4M406.2 332.5L405.6 332.5M213.3 369.9L211.8 360.9M467.7 380.7L465.0 388.3M273.3 354.2L285.6 344.1M294.7 220.8L287.4 212.4M509.8 201.4L505.1 203.9M345.6 495.0L350.6 500.5M205.7 320.3L211.2 313.5M329.4 218.4L321.6 223.6M287.0 272.0L279.3 264.2M306.6 437.2L303.6 446.3M396.2 281.2L395.9 296.7M430.8 384.2L422.5 388.9M307.3 211.4L299.0 195.7M438.9 350.6L428.3 362.2M441.5 208.1L449.8 205.0M268.9 284.2L271.4 272.2M244.0 426.7L248.1 438.6M408.0 204.0L395.0 201.9M307.5 329.5L310.3 323.9M311.8 285.1L305.3 300.6M406.0 472.1L415.1 488.2M464.7 363.5L450.5 359.3M457.8 188.3L463.1 177.9M392.1 315.8L391.4 305.6M468.8 373.6L467.7 380.7M390.5 182.3L389.9 180.6M376.9 419.9L366.0 429.9M255.8 420.2L246.0 418.6M423.3 230.6L417.0 221.9M281.9 259.9L279.3 264.2M227.2 230.7L231.7 221.4M295.4 240.8L286.7 243.4M243.5 324.9L245.0 328.1M463.1 177.9L462.6 174.8M369.7 494.0L364.6 504.9M448.8 348.8L448.9 331.2M279.3 239.3L286.7 243.4M284.5 478.2L289.7 479.4M432.0 247.2L432.4 238.6M512.1 257.1L511.0 257.4M400.5 176.1L394.0 184.5M262.2 205.0L265.4 204.4M352.3 193.4L345.3 198.8M454.3 389.4L440.7 386.2M438.9 350.6L436.0 339.7M442.1 275.8L433.6 273.7M336.4 383.8L332.4 379.2M475.3 308.7L466.1 298.9M289.7 479.4L297.2 483.8M465.0 388.3L468.0 383.9M372.6 254.3L370.9 244.5M483.9 329.1L484.5 319.1M382.9 495.1L395.1 493.0M244.9 262.6L255.8 265.5M299.9 464.2L303.6 446.3M342.5 310.5L338.2 320.4M331.3 293.4L331.4 281.1M462.1 254.8L461.8 247.3M245.6 332.9L238.9 338.8M485.5 309.6L486.0 307.4M471.3 176.5L462.6 174.8M248.6 308.1L243.2 314.9M432.4 238.6L423.3 230.6M253.6 433.9L255.8 420.2M391.5 156.5L380.8 163.2M294.6 357.6L300.9 355.8M292.3 408.9L301.3 417.2M487.9 291.4L494.3 284.1M347.6 159.1L336.1 163.9M266.9 213.4L269.1 203.3M433.6 273.7L433.8 268.3M476.3 323.9L469.8 332.2M376.9 419.9L377.3 432.9M463.7 197.8L467.7 203.7M386.5 145.2L382.4 141.4M311.6 454.1L314.3 440.6M292.3 408.9L282.1 413.7M471.7 218.2L470.4 224.2M374.6 386.3L372.9 380.9M436.5 202.0L427.7 193.3M454.3 389.4L465.0 388.3M312.9 316.9L313.2 322.2M386.5 342.5L383.0 350.1M326.9 271.1L332.6 273.5M302.7 323.5L307.5 329.5M409.6 155.4L402.1 151.7M473.3 238.6L472.0 231.4M455.9 371.4L467.7 380.7M442.2 290.8L444.3 300.9M439.7 171.0L452.2 167.6M422.1 361.9L423.8 357.2M372.9 380.9L374.5 371.5M267.8 423.2L285.2 423.1M306.5 254.9L310.3 263.0M357.0 503.0L360.1 504.2M348.3 428.4L343.8 445.7M250.2 452.7L251.5 445.8M359.5 354.8L354.2 341.0M279.7 199.3L274.4 200.6M408.5 268.8L414.6 261.3M448.8 348.8L458.8 351.0M342.2 402.1L340.1 410.4M479.2 204.5L470.7 209.0M324.2 188.1L328.4 200.5M356.4 420.2L355.8 437.3M436.4 266.6L433.6 273.7M452.1 476.3L446.8 465.9M438.4 257.8L437.3 259.3M352.3 193.4L355.5 201.0M300.8 333.5L294.9 340.3M329.4 218.4L336.1 225.3M343.8 445.7L355.8 437.3M393.3 219.0L398.7 222.6M332.4 379.2L326.4 370.8M416.4 212.8L425.5 205.2M407.8 191.4L417.2 195.7M454.3 389.4L467.7 380.7M366.9 386.3L370.9 376.5M431.1 324.0L444.2 316.5M214.7 324.2L204.1 333.3M364.5 456.8L370.4 440.1M289.8 234.2L286.7 243.4M277.8 305.6L275.1 317.4M449.7 177.5L447.1 187.0M389.7 472.3L390.7 461.8M332.1 495.1L324.8 492.0M418.3 165.8L409.6 155.4M360.7 297.2L360.4 296.0M315.1 275.5L302.8 268.9M401.9 453.8L386.7 452.4M408.2 227.9L417.0 221.9M240.9 412.9L239.1 407.9M328.8 348.6L325.0 360.7M342.5 310.5L358.8 309.7M238.4 223.3L246.5 230.5M267.8 423.2L282.1 413.7M268.9 284.2L259.7 293.8M471.8 249.2L465.5 242.8M490.5 345.5L492.0 339.6M396.2 281.2L401.5 288.0M358.6 380.7L353.6 365.6M334.3 241.6L333.1 249.7M276.3 366.4L289.6 368.0M479.2 204.5L469.4 203.7M328.9 476.4L312.5 484.7M342.7 337.9L335.9 330.3M468.6 421.0L465.1 431.4M452.9 165.7L452.2 167.6M303.6 244.1L291.0 251.6M347.6 159.1L342.2 178.8M406.0 472.1L426.5 481.7M484.5 299.9L475.3 308.7M245.2 321.5L256.8 320.9M307.5 329.5L303.8 337.7M283.7 442.2L293.0 435.9M454.2 271.7L449.3 284.2M340.1 410.4L333.7 418.1M365.2 330.9L350.6 322.5M382.9 495.1L369.7 494.0M227.7 250.6L244.7 245.2M326.6 366.6L325.0 360.7M452.1 476.3L456.1 467.6M326.7 436.5L314.3 440.6M330.0 236.9L332.7 229.9M257.8 281.4L255.8 265.5M327.6 263.8L329.4 257.0M335.8 287.8L334.4 291.1M234.6 342.7L234.9 348.6M218.4 359.4L213.3 369.9M474.4 370.6L473.3 374.8M386.6 265.5L379.3 272.9M331.3 293.4L323.4 294.6M375.9 344.3L371.6 353.1M335.9 330.3L332.1 332.8M233.3 219.0L232.6 220.2M391.5 156.5L398.0 152.0M301.5 409.8L301.3 417.2M347.6 159.1L354.8 172.8M422.5 388.9L425.0 376.4M444.3 300.9L439.6 291.5M288.7 182.0L287.7 182.1M289.0 261.3L287.0 272.0M271.0 343.7L273.3 354.2M213.3 369.9L222.9 366.4M474.3 367.6L478.2 364.4M363.7 368.6L374.5 371.5M444.6 163.9L452.2 167.6M458.8 176.1L452.2 167.6M312.9 316.9L302.7 323.5M323.4 294.6L331.4 281.1M266.5 318.7L256.8 320.9M417.7 456.8L433.0 469.8M343.8 445.7L335.0 431.3M244.0 426.7L241.7 435.3M454.3 389.4L443.7 375.6M289.0 261.3L279.3 264.2M434.2 216.4L438.0 222.0M315.1 275.5L311.8 285.1M233.5 237.4L227.6 232.0M375.9 344.3L374.6 333.8M299.9 464.2L314.6 464.5M515.4 212.5L519.0 212.8M246.7 342.8L245.6 332.9M415.1 488.2L410.8 494.1M364.5 456.8L376.9 455.2M377.2 395.4L382.2 399.1M387.5 431.7L377.3 432.9M383.9 321.4L374.6 333.8M273.0 220.2L265.5 224.6M444.6 163.9L433.4 162.0M244.0 426.7L255.8 420.2M373.3 469.0L373.7 482.6M436.7 283.6L449.3 284.2M469.2 261.8L474.0 273.2M363.7 368.6L370.9 376.5M387.0 233.5L378.4 228.6M385.3 331.2L383.9 321.4M345.0 374.4L342.3 363.8M442.1 275.8L436.7 283.6M483.3 218.7L474.5 223.3M213.3 369.9L205.8 372.4M370.1 169.2L363.2 183.3M467.3 188.6L463.1 177.9M302.0 422.6L301.3 426.3M229.5 268.4L247.5 278.6M407.8 191.4L396.1 194.0M269.5 231.9L275.3 240.4M466.4 401.4L468.2 408.1M286.8 199.0L299.0 195.7M401.6 310.5L391.4 305.6M464.7 363.5L458.8 351.0M434.2 216.4L431.4 226.6M299.0 195.7L285.2 190.6M271.5 437.5L283.7 442.2M465.2 272.0L460.3 286.6M465.8 393.1L468.0 383.9M505.4 274.0L499.0 277.8M340.5 208.3L350.5 203.0M428.3 362.2L434.5 371.1M474.0 273.2L485.3 280.6M289.4 322.9L295.6 314.6M245.6 355.5L235.4 359.9M417.2 375.8L422.5 388.9M345.0 374.4L334.7 371.3M219.7 243.5L216.7 254.4M213.4 340.0L212.3 347.3M361.4 164.7L354.8 172.8M479.2 204.5L472.2 212.3M415.8 239.4L432.4 238.6M402.4 213.8L416.4 212.8M386.8 223.2L398.7 222.6M442.5 400.0L454.9 401.0M423.9 433.2L420.9 444.5M499.9 211.9L508.9 216.0M437.3 259.3L436.7 262.5M474.0 356.8L478.2 364.4M422.8 149.9L427.8 152.2M383.2 185.9L389.9 180.6M270.3 464.0L276.7 467.0M294.9 340.3L285.6 344.1M326.7 436.5L343.8 445.7M403.3 160.7L418.3 165.8M463.5 391.5L466.4 400.3M405.6 332.5L406.6 328.6M295.4 240.8L303.6 244.1M449.7 177.5L435.3 183.3M282.1 413.7L269.6 409.8M230.4 370.4L225.1 382.3M399.1 270.6L407.4 271.3M330.5 255.4L329.4 257.0M262.4 450.0L271.5 437.5M220.4 240.3L219.7 243.5M294.6 357.6L289.6 368.0M472.2 212.3L471.7 218.2M413.2 260.8L414.6 261.3M423.4 353.0L423.8 357.2M438.0 222.0L440.5 216.3M334.6 237.7L335.7 242.3M285.6 344.1L296.0 350.8M481.1 314.6L466.9 319.0M404.4 264.2L407.4 271.3M249.9 239.3L253.0 248.2M213.4 340.0L218.3 333.9M474.5 223.3L480.7 232.9M255.8 265.5L255.1 254.4M299.9 344.2L298.4 347.2M386.6 265.5L379.8 259.4M324.0 169.7L315.5 159.1M355.2 489.5L373.7 482.6M418.3 165.8L427.4 170.4M352.3 193.4L363.2 183.3M510.5 240.5L512.5 248.4M444.2 316.5L437.9 330.7M485.5 309.6L484.5 319.1M276.3 366.4L268.2 380.4M255.8 398.9L255.9 388.3M468.8 373.6L473.3 374.8M338.2 320.4L335.9 330.3M442.5 400.0L441.3 412.1M399.1 428.4L403.9 438.3M361.4 164.7L358.1 160.5M456.1 440.7L437.9 445.8M515.4 212.5L518.1 217.9M363.2 183.3L362.8 193.1M430.8 384.2L425.0 376.4M484.5 299.9L472.5 286.8M373.7 282.8L365.7 278.8M383.0 248.5L399.9 242.0M467.7 380.7L473.3 374.8M230.4 370.4L235.4 359.9M374.5 503.8L371.3 505.3M382.9 495.1L385.2 486.2M345.0 374.4L344.0 387.4M461.8 247.3L465.5 242.8M463.7 197.8L456.2 197.3M414.3 403.5L407.1 399.0M363.7 342.1L365.2 330.9M422.1 361.9L422.4 354.1M383.9 321.4L394.2 333.2M474.5 223.3L470.4 224.2M421.7 156.1L418.3 165.8M491.9 201.0L491.0 211.9M454.3 389.4L463.5 391.5M430.9 425.2L442.1 432.2M408.5 268.8L407.4 271.3M345.6 495.0L355.2 489.5M303.8 395.0L309.2 389.8M342.2 402.1L342.4 401.0M322.5 259.2L329.4 257.0M475.3 308.7L485.5 309.6M437.6 311.6L444.3 300.9M249.9 239.3L250.3 236.9M268.2 380.4L265.4 370.8M343.1 327.3L350.6 322.5M264.5 462.1L266.3 464.9M238.9 338.8L234.6 342.7M393.1 441.8L399.1 428.4M370.1 169.2L361.4 164.7M457.5 327.5L469.8 332.2M468.2 408.1L466.4 400.3M379.6 503.4L389.4 501.0M217.6 308.9L221.9 321.0M456.1 440.7L444.4 454.4M486.0 307.4L487.7 298.2M373.4 401.5L362.6 396.0M479.2 259.9L474.0 273.2M508.9 216.0L505.1 203.9M499.0 277.8L496.7 285.2M287.7 182.1L285.2 190.6M293.6 377.5L300.9 389.5M299.9 344.2L304.3 338.5M410.3 149.3L415.9 148.5M457.8 188.3L463.7 197.8M216.2 255.6L219.7 243.5M396.1 194.0L395.0 201.9M266.9 213.4L263.2 221.8M245.6 355.5L258.8 347.5M382.9 495.1L390.1 499.1M229.5 268.4L216.7 271.4M426.1 216.6L417.0 221.9M299.3 231.6L289.8 234.2M386.5 342.5L374.6 333.8M283.7 442.2L287.2 444.0M373.3 469.0L376.9 455.2M329.4 218.4L328.4 200.5M279.3 239.3L279.9 228.1M455.6 298.6L466.1 298.9M326.9 271.1L327.6 263.8M214.7 324.2L206.3 336.6M338.0 231.9L336.1 225.3M363.2 183.3L373.9 188.3M294.9 340.3L289.4 322.9M380.9 153.3L378.4 143.8M373.3 365.4L374.2 365.5M471.7 178.7L471.3 176.5M466.9 319.0L469.8 332.2M331.3 293.4L328.3 302.6M407.2 398.7L409.8 390.0M333.3 329.5L332.1 332.8M328.4 200.5L335.9 192.1M330.8 156.1L336.1 163.9M365.9 285.1L370.7 293.4M267.8 401.0L283.6 402.5M465.2 272.0L469.2 261.8M259.7 293.8L267.2 305.4M330.8 156.1L324.0 169.7M433.0 469.8L440.2 483.3M382.9 495.1L389.4 501.0M453.4 427.0L465.1 431.4M319.3 234.8L332.7 229.9M467.3 188.6L471.7 178.7M415.0 429.1L403.9 438.3M330.0 236.9L334.6 237.7M299.5 286.5L302.8 268.9M262.4 450.0L257.5 458.1M228.5 300.6L234.1 308.1M442.2 290.8L449.3 284.2M244.7 245.2L249.9 239.3M358.6 380.7L366.9 386.3M366.6 414.6L362.6 396.0M289.8 234.2L294.7 220.8M428.7 336.1L426.6 346.9M306.6 437.2L308.0 433.9M348.3 428.4L355.8 437.3M250.3 408.7L244.8 402.4M299.3 484.3L305.7 477.8M410.3 149.3L409.6 155.4M334.3 241.6L334.6 237.7M438.9 350.6L423.4 353.0M326.0 247.3L333.1 249.7M399.6 483.8L389.7 472.3M451.3 257.0L444.0 262.9M342.5 310.5L350.6 322.5M238.4 223.3L242.9 213.4M505.4 274.0L512.1 271.5M387.0 233.5L399.9 242.0M251.5 445.8L247.8 448.0M504.1 264.3L498.9 256.1M315.5 321.9L318.4 316.3M318.6 310.8L325.3 309.3M340.5 208.3L328.4 200.5M417.7 456.8L420.9 444.5M315.5 159.1L308.9 155.5M428.3 362.2L422.1 361.9M468.6 421.0L470.6 416.4M397.2 205.6L395.0 201.9M220.2 329.7L218.3 333.9M249.2 326.8L256.8 320.9M266.9 213.4L275.7 204.8M338.0 464.6L343.8 445.7M399.1 270.6L402.8 276.7M370.7 293.4L364.4 288.6M496.4 230.8L510.5 240.5M284.8 468.5L284.5 478.2M464.7 363.5L474.3 367.6M279.5 276.9L278.3 269.8M371.1 265.6L363.1 259.9M235.4 382.3L228.3 398.4M314.7 297.6L328.3 302.6M253.3 378.9L255.9 388.3M428.7 336.1L423.2 343.7M455.9 371.4L450.5 359.3M242.1 317.9L243.5 324.9M263.7 333.8L271.0 343.7M263.7 333.8L258.8 347.5M314.7 297.6L325.3 309.3M331.4 281.1L335.8 287.8M360.7 297.2L370.7 293.4M289.8 234.2L279.9 228.1M457.2 336.6L448.9 331.2M342.7 337.9L347.8 347.3M415.8 239.4L408.3 254.0M268.9 284.2L257.8 281.4M334.7 371.3L326.4 370.8M401.9 453.8L390.7 461.8M474.4 370.6L478.2 364.4M326.7 436.5L333.1 451.2M227.7 250.6L233.5 237.4M410.3 149.3L416.6 149.1M271.4 272.2L274.8 271.8M337.9 353.8L328.8 348.6M465.8 393.1L465.0 388.3M399.9 326.7L406.6 328.6M368.4 272.3L365.7 278.8M466.9 319.0L476.3 323.9M263.7 333.8L266.5 318.7M470.8 342.7L486.5 339.1M455.9 371.4L464.7 363.5M490.0 182.3L479.4 176.7M342.5 310.5L341.6 307.2M497.9 202.3L505.1 203.9M399.1 231.9L408.2 227.9M481.1 314.6L475.3 308.7M467.3 188.6L481.0 195.1M307.3 211.4L297.5 209.8M279.0 197.5L274.4 200.6M417.7 456.8L414.2 438.9M299.5 286.5L311.8 285.1M312.9 316.9L295.6 314.6M368.0 239.2L366.5 240.7M340.2 394.2L342.2 402.1M299.0 195.7L288.7 182.0M252.5 298.8L258.1 309.5M414.1 390.9L407.2 398.7M386.8 223.2L383.1 222.7M386.5 342.5L394.2 333.2M456.2 197.3L467.7 203.7M302.0 422.6L294.8 423.9M352.8 201.7L355.5 201.0M483.8 179.4L490.0 182.3M395.9 296.7L401.5 288.0M436.4 266.6L436.7 262.5M467.7 203.7L470.7 209.0M487.8 269.0L485.5 251.5M356.4 420.2L366.6 414.6M255.8 398.9L250.3 408.7M267.8 401.0L269.6 409.8M245.6 355.5L246.7 342.8M295.4 240.8L289.8 234.2M383.9 285.9L370.7 293.4M279.5 276.9L271.4 272.2M377.0 392.1L374.6 386.3M423.4 353.0L422.4 354.1M348.3 428.4L335.0 431.3M462.1 254.8L457.7 250.1M239.7 208.9L242.9 213.4M404.0 319.5L399.9 326.7M311.8 307.8L318.6 310.8M454.3 389.4L454.9 401.0M338.0 231.9L335.7 242.3M284.8 468.5L278.5 473.7M434.2 216.4L436.5 202.0M321.3 447.6L333.1 451.2M417.7 456.8L401.9 453.8M301.0 368.9L309.2 375.2M472.5 286.8L474.0 273.2M466.9 319.0L462.6 307.9M347.6 159.1L342.4 153.9M386.5 342.5L375.9 344.3M243.2 314.9L242.1 317.9M337.9 353.8L332.3 362.0M457.2 336.6L458.8 351.0M300.8 333.5L303.8 337.7M323.4 294.6L328.3 302.6M307.3 211.4L306.9 224.3M333.1 451.2L322.8 456.4M404.4 264.2L408.3 254.0M373.3 469.0L390.7 461.8M465.6 432.1L464.4 443.1M350.6 355.6L342.3 363.8M226.1 309.6L217.6 308.9M338.2 320.4L337.9 312.0M258.1 309.5L266.5 318.7M262.2 205.0L252.1 207.1M466.9 319.0L457.5 327.5M414.1 390.9L413.4 383.5M365.2 248.8L362.8 246.2M467.7 380.7L468.0 383.9M417.2 375.8L425.0 376.4M454.0 316.6L466.9 319.0M359.5 354.8L363.7 342.1M491.9 201.0L481.0 195.1M284.5 354.4L276.3 366.4M462.1 254.8L465.2 272.0M232.6 220.2L231.7 221.4M244.0 426.7L246.0 418.6M434.5 486.1L433.0 469.8M518.1 217.9L508.9 216.0M376.3 235.9L373.5 231.4M513.9 251.0L511.0 257.4M508.3 202.8L514.5 207.0M335.9 192.1L345.3 198.8M442.5 400.0L440.7 386.2M402.4 213.8L397.2 205.6M457.7 250.1L453.4 251.0M303.8 395.0L302.1 397.1M408.0 204.0L417.2 195.7M315.5 321.9L312.9 316.9M388.0 345.1L392.7 343.9M456.1 467.6L458.0 470.9M292.3 408.9L294.8 423.9M463.5 391.5L465.0 388.3M360.7 297.2L367.5 302.2M467.3 188.6L463.7 197.8M399.4 414.1L387.5 431.7M388.4 185.4L389.9 180.6M442.1 432.2L423.9 433.2M354.2 341.0L347.8 347.3M321.6 223.6L332.7 229.9M436.5 202.0L425.5 205.2M414.3 403.5L422.5 388.9M244.7 245.2L246.5 230.5M380.8 163.2L371.4 154.9M430.8 384.2L440.7 386.2M332.6 273.5L333.1 268.0M350.6 355.6L347.8 347.3M454.2 415.2L468.6 421.0M263.7 333.8L246.7 342.8M428.7 336.1L437.9 330.7M333.1 268.0L327.6 263.8M369.7 494.0L371.3 505.3M490.8 241.7L498.9 256.1M344.0 387.4L336.4 383.8M383.0 350.1L381.8 353.6M370.4 440.1L366.0 429.9M456.1 440.7L465.1 431.4M440.5 216.3L443.9 212.1M378.4 143.8L382.4 141.4M474.0 356.8L479.9 360.6M299.9 464.2L290.6 452.9M345.0 374.4L332.3 378.2M290.4 170.7L296.0 166.8M310.3 263.0L302.8 268.9M330.4 339.4L332.1 332.8M472.5 286.8L460.3 286.6M385.4 298.1L370.7 293.4M372.6 254.3L383.0 248.5M284.1 376.3L276.1 391.3M340.5 208.3L343.1 214.7M491.0 211.9L496.4 230.8M481.1 314.6L476.3 323.9M284.5 354.4L296.0 350.8M244.9 262.6L247.5 278.6M207.2 303.4L217.6 292.2M265.4 370.8L256.6 357.3M277.8 305.6L289.4 322.9M238.4 223.3L251.6 217.2M472.5 286.8L465.2 272.0M326.9 271.1L333.1 268.0M369.7 494.0L374.5 503.8M334.7 371.3L342.3 363.8M340.2 394.2L342.4 401.0M421.7 156.1L427.8 152.2M422.1 361.9L419.0 367.8M230.4 370.4L222.9 366.4M380.9 153.3L370.2 147.4M399.1 270.6L397.6 256.4M431.1 324.0L437.6 311.6M360.7 297.2L358.8 309.7M404.0 319.5L404.6 317.2M373.7 282.8L383.9 285.9M287.5 385.5L293.6 377.5M418.1 184.1L407.8 191.4M229.5 268.4L216.2 255.6M404.4 264.2L397.6 256.4M370.1 169.2L364.4 160.1M407.8 191.4L400.5 176.1M454.2 415.2L463.0 410.0M269.1 203.3L275.7 204.8M387.0 233.5L386.8 223.2M283.6 402.5L302.1 397.1M449.7 177.5L439.7 171.0M257.8 281.4L271.4 272.2M352.3 193.4L362.8 193.1M383.9 285.9L385.4 298.1M343.9 408.1L350.6 410.8M370.4 440.1L377.3 432.9M457.8 188.3L447.1 187.0M471.8 249.2L467.3 241.1M413.2 175.6L400.5 176.1M350.6 322.5L355.8 330.7M433.4 162.0L439.1 158.6M299.5 286.5L305.3 300.6M299.9 464.2L289.5 461.1M271.5 437.5L262.8 431.5M463.7 197.8L469.4 203.7M302.0 401.0L302.1 397.1M436.5 202.0L449.4 200.9M227.7 250.6L220.4 240.3M285.9 288.2L284.0 298.8M350.6 322.5L338.2 320.4M294.6 177.8L294.0 170.3M246.5 230.5L248.5 229.7M270.3 464.0L264.5 462.1M370.1 169.2L373.9 188.3M360.7 297.2L352.5 301.3M403.3 160.7L391.5 156.5M248.1 438.6L251.5 445.8M392.1 315.8L404.0 319.5M262.4 450.0L251.5 445.8M386.6 265.5L397.6 256.4M279.5 276.9L287.0 272.0M345.3 198.8L352.8 201.7M468.4 413.8L463.0 410.0M363.7 368.6L373.3 365.4M355.8 437.3L351.8 450.4M315.5 321.9L313.2 322.2M216.2 255.6L216.7 271.4M326.7 436.5L335.0 431.3M452.9 165.7L445.1 161.6M392.7 343.9L399.9 337.3M442.2 290.8L439.6 291.5M513.2 224.6L508.9 216.0M399.9 337.3L405.6 332.5M300.9 389.5L307.3 386.8M383.9 285.9L395.9 296.7M276.3 366.4L273.3 354.2M428.7 336.1L427.1 334.9M277.3 246.8L286.7 243.4M236.5 347.5L234.9 348.6M245.6 332.9L249.2 326.8M323.4 294.6L311.8 285.1M326.6 366.6L326.4 370.8M394.0 184.5L395.9 189.6M487.8 269.0L499.0 277.8M467.3 188.6L469.4 203.7M401.9 494.1L395.1 493.0M427.1 409.4L430.9 425.2M300.8 354.2L296.0 350.8M490.8 241.7L480.7 232.9M256.2 367.2L265.4 370.8M313.8 243.5L303.6 244.1M227.7 250.6L219.7 243.5M302.7 323.5L310.3 323.9M491.9 201.0L479.2 204.5M399.9 326.7L405.6 332.5M392.1 315.8L401.6 310.5M286.8 199.0L297.5 209.8M279.3 239.3L269.5 231.9M206.3 336.6L204.1 333.3M408.3 254.0L399.9 242.0M253.6 433.9L262.4 450.0M333.6 487.4L332.1 495.1M417.7 456.8L406.0 472.1M253.3 378.9L265.4 370.8M342.5 310.5L346.6 303.2M278.5 460.4L270.5 455.6M295.1 432.5L287.6 432.5M252.5 298.8L259.7 293.8M444.6 163.9L445.1 161.6M293.6 377.5L306.9 381.2M277.7 211.7L287.4 212.4M390.1 499.1L389.4 501.0M487.9 291.4L485.3 280.6M373.9 188.3L383.2 185.9M387.5 431.7L393.1 441.8M368.0 239.2L370.8 235.3M257.8 281.4L247.5 278.6M435.3 459.7L430.8 451.5M445.9 478.6L452.3 480.0M438.0 222.0L441.6 219.3M413.2 175.6L418.1 184.1M449.7 196.4L454.8 194.3M302.0 401.0L301.5 409.8M304.3 338.5L303.8 337.7M439.6 291.5L438.9 303.5M515.4 212.5L514.5 207.0M371.1 265.6L379.8 259.4M399.4 414.1L392.4 408.5M376.3 235.9L370.9 244.5M278.5 460.4L289.5 461.1M306.5 254.9L322.5 259.2M240.9 412.9L233.6 426.3M294.9 340.3L279.5 336.6M293.6 377.5L284.1 376.3M485.5 251.5L473.3 238.6M377.2 395.4L377.0 392.1M366.9 386.3L362.6 396.0M308.8 389.5L309.2 389.8M399.1 270.6L396.2 281.2M251.5 445.8L253.8 454.8M399.6 483.8L410.8 494.1M386.8 176.2L383.2 185.9M378.4 228.6L373.5 231.4M442.1 432.2L453.4 427.0M355.2 489.5L344.1 482.7M397.2 205.6L394.1 213.7M443.7 375.6L440.7 386.2M217.6 308.9L217.6 292.2M301.3 167.7L294.0 170.3M373.5 231.4L370.8 235.3M229.5 268.4L228.4 290.9M434.2 216.4L440.5 216.3M422.5 388.9L428.7 400.4M342.5 310.5L353.2 304.4M441.5 208.1L436.5 202.0M257.8 281.4L259.7 293.8M225.1 382.3L222.9 391.9M245.6 355.5L234.9 348.6M466.4 401.4L466.4 400.3M389.7 472.3L385.2 486.2M337.3 282.3L333.1 268.0M410.3 149.3L402.1 151.7M393.1 441.8L380.3 444.9M282.7 451.7L271.5 437.5M418.1 184.1L435.3 183.3M454.2 415.2L454.9 401.0M376.9 419.9L383.3 407.2M376.3 235.9L378.4 228.6M436.0 339.7L428.7 336.1M294.8 423.9L301.3 417.2M454.2 271.7L460.3 286.6M363.7 342.1L371.6 353.1M474.0 356.8L483.0 347.9M454.2 271.7L462.1 254.8M385.4 298.1L395.9 296.7M386.6 265.5L396.2 281.2M337.2 221.7L336.1 225.3M469.2 261.8L471.8 249.2M333.1 420.9L335.0 431.3M338.2 320.4L335.3 315.5M457.2 336.6L470.8 342.7M301.0 368.9L293.6 377.5M259.7 293.8L258.1 309.5M262.4 450.0L262.8 431.5M399.6 483.8L406.0 472.1M209.9 381.6L205.8 372.4M299.3 231.6L306.9 224.3M436.5 202.0L449.7 196.4M454.2 271.7L465.2 272.0M401.6 288.8L402.9 295.7M463.5 391.5L465.8 393.1M392.1 315.8L377.8 307.9M486.3 355.0L487.5 352.5M303.8 395.0L300.9 389.5M263.8 267.9L265.1 267.6M406.6 328.6L407.5 312.9M232.9 398.9L228.3 398.4M402.4 213.8L393.3 219.0M244.9 262.6L253.0 248.2M434.5 486.1L435.5 486.8M236.5 347.5L238.9 338.8M413.2 260.8L422.7 254.0M255.8 265.5L247.5 278.6M226.1 309.6L234.1 308.1M359.5 354.8L371.6 353.1M258.8 347.5L246.7 342.8M469.4 203.7L470.7 209.0M423.5 367.0L418.9 371.9M363.7 342.1L374.6 333.8M214.7 324.2L221.9 321.0M299.9 344.2L302.9 344.0M454.2 415.2L441.3 412.1M369.7 494.0L360.1 504.2M401.9 453.8L406.0 472.1M225.1 382.3L211.7 383.6M244.4 406.1L239.1 407.9M217.6 292.2L228.5 300.6M267.8 401.0L276.1 391.3M396.2 281.2L379.3 272.9M456.1 440.7L463.7 445.6M440.5 216.3L441.6 219.3M212.3 347.3L218.0 338.6M403.3 160.7L409.6 155.4M220.4 240.3L216.2 255.6M268.2 380.4L284.1 376.3M468.8 373.6L474.3 367.6M246.2 386.5L255.9 388.3M338.2 320.4L333.3 329.5M462.6 174.8L458.8 176.1M486.3 355.0L479.9 360.6M263.7 333.8L249.2 326.8M470.8 342.7L458.8 351.0M441.3 412.1L454.9 401.0M242.9 213.4L252.1 207.1M504.8 275.9L512.1 271.5M238.4 223.3L248.5 229.7M365.2 248.8L365.5 257.9M250.2 452.7L247.8 448.0M289.0 261.3L281.9 259.9M374.5 503.8L379.6 503.4M386.7 452.4L376.9 455.2M369.7 149.7L364.4 160.1M370.9 244.5L366.5 240.7M432.0 247.2L423.9 248.8M255.8 398.9L267.8 401.0M370.9 323.3L374.6 333.8M496.4 230.8L508.9 216.0M268.2 380.4L255.9 388.3M265.5 224.6L269.0 230.7M340.2 394.2L339.8 393.5M326.9 271.1L322.5 259.2M248.6 308.1L239.5 305.7M259.1 210.6L252.1 207.1M326.0 247.3L329.4 257.0M404.0 319.5L406.6 328.6M322.4 488.8L320.4 490.9M438.9 350.6L423.8 357.2M391.4 305.6L395.9 296.7M442.5 400.0L428.7 400.4M423.9 433.2L415.0 429.1M334.3 241.6L335.7 242.3M228.5 300.6L228.4 290.9M328.8 348.6L332.3 362.0M456.1 467.6L460.7 461.0M311.6 454.1L322.8 456.4M356.4 420.2L366.0 429.9M248.1 438.6L245.9 440.9M256.2 367.2L256.6 357.3M422.5 388.9L413.4 383.5M371.1 265.6L368.4 272.3M282.7 451.7L283.7 442.2M333.3 302.3L334.4 291.1M402.4 213.8L408.2 227.9M426.6 346.9L423.2 343.7M364.5 456.8L351.0 470.0M449.7 177.5L457.8 188.3M421.7 156.1L409.6 155.4M457.8 188.3L458.8 176.1M370.9 376.5L374.5 371.5M430.8 384.2L428.7 400.4M483.3 218.7L496.4 230.8M483.0 347.9L487.5 352.5M338.0 464.6L351.8 450.4M267.8 423.2L269.6 409.8M331.4 281.1L326.9 271.1M383.0 350.1L392.7 343.9M295.4 300.9L305.3 300.6M331.4 281.1L334.4 291.1M499.0 277.8L504.8 275.9M468.6 421.0L468.4 413.8M345.6 495.0L335.7 496.0M358.6 380.7L370.9 376.5M442.2 290.8L455.6 298.6M433.8 153.9L439.1 158.6M245.6 355.5L256.6 357.3M284.1 376.3L289.6 368.0M449.7 177.5L452.2 167.6M338.0 464.6L344.1 482.7M380.9 153.3L377.3 143.6M436.0 339.7L426.6 346.9M487.8 269.0L474.0 273.2M216.2 255.6L216.7 254.4M423.3 230.6L426.1 216.6M444.0 262.9L436.4 266.6M306.9 224.3L321.6 223.6M382.9 495.1L373.7 482.6M316.1 204.7L321.6 223.6M304.0 359.8L300.8 354.2M431.4 226.6L438.0 222.0M275.1 317.4L289.4 322.9M335.0 431.3L319.4 429.4M265.8 220.6L263.2 221.8M386.7 452.4L380.3 444.9M236.5 347.5L234.6 342.7M387.0 233.5L399.1 231.9M279.3 239.3L277.3 246.8M504.1 264.3L499.0 277.8M421.7 156.1L416.6 149.1M294.6 357.6L301.0 368.9M295.1 432.5L293.0 435.9M259.1 210.6L257.3 223.4M399.4 414.1L399.1 428.4M455.9 371.4L443.7 375.6M300.8 333.5L302.7 323.5M407.2 398.7L407.1 399.0M324.2 188.1L316.1 204.7M323.2 466.7L338.0 464.6M301.0 368.9L308.3 369.6M510.5 240.5L513.2 224.6M479.2 259.9L471.8 249.2M399.1 231.9L398.7 222.6M259.1 210.6L251.6 217.2M227.7 250.6L244.9 262.6M323.2 466.7L312.5 484.7M243.2 314.9L245.2 321.5M283.6 402.5L302.0 401.0M431.1 324.0L437.9 330.7M263.7 333.8L275.1 317.4M287.6 432.5L293.0 435.9M417.7 456.8L435.3 459.7M427.1 409.4L418.7 415.2M438.9 350.6L450.5 359.3M210.2 288.3L217.6 292.2M433.4 162.0L427.8 152.2M489.9 187.9L495.6 199.4M386.8 176.2L389.9 180.6M287.5 385.5L300.9 389.5M239.7 208.9L243.8 203.3M363.7 342.1L375.9 344.3M263.7 333.8L256.8 320.9M301.3 167.7L294.6 177.8M449.7 196.4L449.4 200.9M284.8 468.5L289.5 461.1M386.8 223.2L399.1 231.9M304.3 338.5L302.9 344.0M472.0 231.4L470.4 224.2M413.2 175.6L427.4 170.4M358.6 380.7L344.0 387.4M342.2 178.8L335.9 192.1M370.1 169.2L383.2 185.9M264.1 391.3L255.9 388.3M455.6 298.6L444.3 300.9M239.5 305.7L239.6 310.1M487.8 269.0L498.9 256.1M343.8 445.7L351.8 450.4M213.6 389.5L211.7 383.6M291.0 251.6L286.7 243.4M300.9 389.5L306.9 381.2M233.3 219.0L242.9 213.4M481.1 314.6L485.5 309.6M284.8 468.5L278.5 460.4M301.3 167.7L296.0 166.8M287.4 212.4L279.9 228.1M370.7 293.4L360.4 296.0M386.7 452.4L390.7 461.8M259.1 210.6L262.2 205.0M474.0 356.8L486.3 355.0M343.1 327.3L342.7 337.9M387.0 233.5L380.2 226.5M404.4 264.2L408.5 268.8M279.5 276.9L274.8 271.8M238.8 289.6L229.5 268.4M494.3 284.1L496.7 285.2M237.0 429.6L233.6 426.3M245.2 321.5L243.5 324.9M404.2 299.7L405.3 301.1M463.5 391.5L454.9 401.0M334.7 371.3L332.3 378.2M372.6 254.3L365.5 257.9M403.3 160.7L392.6 168.8M321.3 447.6L322.8 456.4M337.3 282.3L332.6 273.5M441.5 208.1L440.5 216.3M345.6 495.0L333.6 487.4M271.4 272.2L265.1 267.6M278.5 473.7L276.7 467.0M306.5 254.9L302.8 268.9M262.4 450.0L270.5 455.6M294.8 423.9L301.3 426.3M258.1 309.5L256.8 320.9M342.5 310.5L337.9 312.0M451.3 257.0L453.4 251.0M415.1 488.2L426.5 481.7M497.9 202.3L495.6 199.4M204.3 327.3L202.7 328.6M462.1 254.8L471.8 249.2M363.7 368.6L353.6 365.6M486.3 355.0L483.0 347.9M333.1 420.9L340.7 418.4M314.3 440.6L306.6 437.2M235.4 359.9L222.9 366.4M277.8 305.6L267.2 305.4M238.4 223.3L232.0 224.1M265.8 220.6L266.9 213.4M252.1 207.1L243.8 203.3M436.7 262.5L433.8 268.3M476.3 323.9L484.5 319.1M483.8 179.4L479.4 176.7M499.9 211.9L491.0 211.9M268.2 380.4L276.1 391.3M436.4 266.6L433.8 268.3M279.7 199.3L275.7 204.8M402.4 213.8L394.1 213.7M406.6 328.6L404.6 317.2M292.8 473.4L284.5 478.2M295.6 314.6L284.0 298.8M469.4 203.7L467.7 203.7M365.2 330.9L374.6 333.8M323.2 466.7L314.6 464.5M300.9 389.5L308.8 389.5M423.5 367.0L419.0 367.8M277.7 211.7L279.9 228.1M337.9 353.8L329.8 344.8M319.4 429.4L308.8 433.4M434.5 371.1L423.5 367.0M470.8 342.7L474.0 356.8M393.1 441.8L403.9 438.3M319.0 427.7L319.4 429.4M213.3 369.9L211.7 383.6M440.7 386.2L428.7 400.4M415.8 239.4L423.9 248.8M308.8 433.4L308.0 433.9M300.8 333.5L289.4 322.9M397.6 256.4L379.8 259.4M212.3 347.3L211.5 350.3M434.5 486.1L440.2 483.3M373.7 282.8L365.9 285.1M436.0 339.7L437.9 330.7M338.2 320.4L334.5 318.6M423.9 433.2L414.2 438.9M294.6 177.8L290.4 170.7M414.1 390.9L409.8 390.0M365.2 248.8L361.4 254.9M364.6 504.9L371.3 505.3M299.5 286.5L295.4 300.9M266.5 318.7L267.2 305.4M392.1 315.8L399.9 326.7M407.8 191.4L408.0 204.0M312.9 316.9L318.6 310.8M370.9 244.5L370.8 235.3M449.3 284.2L460.3 286.6M383.9 321.4L370.9 323.3M307.7 160.8L315.5 159.1M376.3 235.9L370.8 235.3M513.9 251.0L512.5 248.4M508.3 202.8L509.8 201.4M444.4 454.4L430.8 451.5M363.7 342.1L355.8 330.7M280.7 251.6L286.7 243.4M450.5 359.3L458.8 351.0M294.7 220.8L279.9 228.1M328.3 302.6L333.3 302.3M469.2 261.8L479.2 259.9M350.6 500.5L357.0 503.0M285.9 288.2L287.0 272.0M415.0 429.1L414.2 438.9M300.8 354.2L300.9 355.8M248.1 438.6L241.7 435.3M211.2 313.5L221.9 321.0M383.0 248.5L397.6 256.4M444.0 262.9L445.7 254.4M484.5 299.9L487.9 291.4M512.1 257.1L513.9 251.0M287.5 385.5L283.6 402.5M444.0 262.9L436.7 262.5M504.1 264.3L505.4 274.0M315.1 275.5L326.9 271.1M448.9 331.2L444.2 316.5M222.3 393.7L228.3 398.4M504.1 264.3L512.1 271.5M370.9 376.5L372.9 380.9M518.1 217.9L518.9 216.6M483.0 347.9L490.5 345.5M333.1 420.9L333.7 418.1M420.9 444.5L430.8 451.5M370.1 169.2L354.8 172.8M383.0 350.1L388.0 345.1M434.2 216.4L426.1 216.6M332.3 362.0L326.6 366.6M295.4 300.9L284.0 298.8M473.3 238.6L480.7 232.9M513.2 224.6L518.1 217.9M314.7 297.6L318.6 310.8M378.4 143.8L377.3 143.6M487.7 298.2L491.9 292.5M484.5 299.9L466.1 298.9M267.8 423.2L260.0 410.7M449.7 177.5L458.8 176.1M290.4 170.7L294.0 170.3M330.4 339.4L329.8 344.8M355.2 489.5L351.0 470.0M250.2 452.7L253.8 454.8M338.0 464.6L322.8 456.4M430.9 425.2L441.3 412.1M345.3 198.8L350.5 203.0M453.0 307.2L444.3 300.9M425.0 376.4L418.9 371.9M342.2 178.8L336.1 163.9M432.0 247.2L439.8 244.4M308.4 186.3L294.6 177.8M305.7 477.8L312.5 484.7M268.9 284.2L285.9 288.2M342.2 178.8L324.0 169.7M396.2 281.2L402.8 276.7M454.9 401.0L466.4 400.3M436.0 284.0L439.6 291.5M407.5 312.9L405.3 301.1M487.9 291.4L491.9 292.5M401.6 310.5L407.5 312.9M405.3 301.1L402.9 295.7M394.1 213.7L383.1 222.7M404.2 299.7L395.9 296.7M416.4 212.8L417.2 195.7M403.3 160.7L402.1 151.7M286.8 199.0L279.7 199.3M268.9 284.2L269.6 295.2M423.9 433.2L437.9 445.8M299.9 464.2L292.8 473.4M250.3 408.7L255.8 420.2M348.3 400.8L340.2 394.2M301.3 167.7L308.4 186.3M435.3 183.3L447.1 187.0M471.8 249.2L464.3 247.0M306.9 224.3L319.3 234.8M392.1 315.8L404.6 317.2M242.9 213.4L243.8 203.3M466.1 298.9L462.6 307.9M238.4 223.3L232.6 220.2M475.3 308.7L466.9 319.0M218.4 359.4L211.8 360.9M352.3 193.4L354.8 172.8M267.8 423.2L271.5 437.5M348.3 400.8L342.2 402.1M358.1 160.5L350.1 158.1M387.5 431.7L399.1 428.4M465.5 242.8L467.3 241.1M257.5 458.1L253.8 454.8M483.8 179.4L471.7 178.7M270.3 464.0L266.3 464.9M331.4 281.1L332.6 273.5M383.3 407.2L392.4 408.5M399.9 326.7L394.2 333.2M276.3 366.4L284.1 376.3M433.8 153.9L427.8 152.2M456.1 440.7L453.4 427.0M376.9 455.2L380.3 444.9M256.2 367.2L240.5 371.1M287.6 432.5L285.2 423.1M356.4 420.2L350.6 410.8M345.6 495.0L344.1 482.7M239.5 305.7L234.1 308.1M312.9 316.9L310.3 323.9M258.8 347.5L256.6 357.3M246.2 386.5L240.0 396.2M342.7 337.9L332.1 332.8M292.3 408.9L301.5 409.8M265.4 370.8L273.3 354.2M376.9 419.9L366.6 414.6M444.2 316.5L444.3 300.9M414.6 261.3L422.7 254.0M324.0 169.7L336.1 163.9M365.9 285.1L365.7 278.8M313.8 243.5L319.3 234.8M246.7 342.8L236.5 347.5M355.2 489.5L357.0 503.0M246.5 230.5L250.3 236.9M496.4 230.8L513.2 224.6M245.2 321.5L242.1 317.9M284.5 354.4L289.6 368.0M361.4 254.9L365.5 257.9M423.5 367.0L422.1 361.9M466.1 298.9L460.3 286.6M348.3 400.8L351.9 391.8M437.6 311.6L433.5 309.3M214.7 324.2L205.7 320.3M277.8 305.6L284.0 298.8M403.3 160.7L413.2 175.6M402.4 213.8L417.0 221.9M366.6 414.6L350.6 410.8M227.7 250.6L216.7 254.4M385.2 486.2L373.7 482.6M437.9 445.8L430.8 451.5M293.6 377.5L289.6 368.0M214.7 324.2L220.2 329.7M453.0 307.2L454.0 316.6M350.6 322.5L370.9 323.3M342.2 178.8L354.8 172.8M456.1 440.7L459.0 451.8M451.3 257.0L457.7 250.1M260.0 410.7L250.3 408.7M405.8 497.1L408.3 496.8M324.2 188.1L335.9 192.1M358.6 380.7L351.9 391.8M204.3 327.3L204.8 321.5M360.7 297.2L353.2 304.4M366.6 414.6L373.4 401.5M211.8 360.9L208.6 359.5M238.8 289.6L228.5 300.6M444.6 163.9L439.1 158.6M403.3 160.7L398.0 152.0M315.1 275.5L331.4 281.1M301.0 368.9L306.4 362.2M399.8 337.0L399.9 337.3M313.8 243.5L326.0 247.3M354.2 341.0L363.7 342.1M305.7 477.8L314.6 464.5M489.9 187.9L493.6 187.3M214.7 324.2L218.3 333.9M260.0 410.7L255.8 420.2M382.4 141.4L377.3 143.6M279.5 336.6L271.0 343.7M483.8 179.4L481.0 195.1M449.7 196.4L456.2 197.3M414.3 403.5L418.7 415.2M370.1 169.2L380.8 163.2M270.3 464.0L278.5 460.4M311.6 454.1L314.6 464.5M275.1 317.4L279.5 336.6M322.4 488.8L333.6 487.4M214.7 324.2L204.3 327.3M263.2 221.8L265.5 224.6M376.9 455.2L390.7 461.8M218.9 276.3L229.5 268.4M380.1 192.7L383.2 185.9M261.7 261.8L263.8 267.9M279.9 228.1L269.0 230.7M308.8 389.5L307.3 386.8M438.9 303.5L433.5 309.3M464.7 363.5L468.8 373.6M370.9 244.5L383.0 248.5M434.5 371.1L439.9 360.4M337.9 353.8L342.7 337.9M213.6 389.5L222.3 393.7M202.7 328.6L204.1 333.3M414.3 403.5L403.3 403.4M230.4 370.4L240.5 371.1M376.3 235.9L383.0 248.5M316.1 204.7L328.4 200.5M249.2 326.8L243.5 324.9M213.3 369.9L209.9 381.6M428.3 362.2L423.8 357.2M338.0 464.6L351.0 470.0M237.0 429.6L241.7 435.3M268.9 284.2L279.5 276.9M326.7 436.5L321.3 447.6M231.1 416.2L240.9 412.9M452.3 480.0L458.0 470.9M446.8 465.9L456.1 467.6M364.6 504.9L360.1 504.2M499.0 277.8L494.3 284.1M332.7 229.9L334.6 237.7M483.3 218.7L491.0 211.9M294.6 357.6L300.8 354.2M415.8 239.4L421.3 250.1M333.6 487.4L335.7 496.0M435.3 459.7L433.0 469.8M415.8 239.4L423.3 230.6M432.4 238.6L431.4 226.6M329.4 218.4L343.1 214.7M352.3 193.4L360.8 190.8M367.5 302.2L370.7 293.4M326.7 436.5L319.4 429.4M455.6 298.6L449.3 284.2M444.2 316.5L454.0 316.6M278.5 460.4L276.7 467.0M365.2 330.9L355.8 330.7M275.1 317.4L267.2 305.4M299.5 286.5L287.0 272.0M279.3 264.2L278.3 269.8M288.8 481.2L284.5 478.2M307.3 211.4L316.1 204.7M422.8 149.9L416.6 149.1M495.4 208.1L498.0 204.1M410.0 390.8L415.9 380.2M417.5 260.2L409.4 261.1M406.3 399.5L403.3 400.5M249.5 395.3L243.9 403.4M351.8 201.7L347.7 207.4M317.6 187.2L326.0 178.9M327.1 210.7L323.2 197.5M504.4 207.6L498.0 204.1M227.5 308.9L230.1 313.4M228.3 238.3L227.5 229.8M249.2 324.5L248.9 315.5M249.2 324.5L259.7 319.7M328.6 343.0L325.3 353.0M302.5 345.9L306.1 333.2M416.3 175.1L406.6 182.2M345.9 446.4L350.1 456.7M372.2 337.8L378.1 348.5M384.3 233.6L393.4 231.5M306.1 333.2L311.8 326.7M433.9 240.3L435.0 227.7M395.3 322.1L406.9 317.3M248.2 350.2L256.6 367.1M343.6 398.8L342.0 399.6M390.0 420.4L378.9 427.2M269.9 435.6L273.1 422.0M361.1 462.1L340.1 468.9M240.6 266.9L252.0 258.3M422.7 429.4L422.2 442.8M254.6 406.0L248.9 402.3M344.5 330.2L339.7 346.3M372.8 268.0L367.9 275.6M294.1 466.6L289.1 478.9M213.4 335.1L219.6 335.3M258.5 218.5L258.4 206.2M319.1 489.6L325.5 493.8M359.2 494.4L363.2 481.5M207.6 366.9L208.3 367.4M387.1 171.8L396.9 177.6M395.3 322.1L393.6 313.0M386.1 317.6L395.3 322.1M390.1 344.7L386.6 340.6M323.9 445.0L334.0 444.2M322.2 251.6L306.8 246.6M430.5 368.3L421.5 368.7M421.9 397.7L410.0 390.8M282.1 451.1L286.0 446.3M479.8 364.1L478.9 366.8M275.6 398.8L262.1 413.6M366.0 291.3L368.4 283.9M288.9 319.8L275.7 315.4M378.1 348.5L386.6 340.6M454.7 312.9L440.9 314.8M301.1 263.7L286.5 263.7M252.5 275.6L252.0 258.3M366.9 245.9L377.0 258.1M326.5 296.5L331.9 289.6M301.1 263.7L304.5 278.8M443.6 326.1L445.0 337.3M337.6 431.6L342.4 422.2M288.9 206.0L294.1 218.0M330.0 161.5L326.0 178.9M261.6 393.2L262.1 413.6M286.5 263.7L286.6 275.6M466.9 201.8L472.4 197.7M325.6 243.0L333.8 243.2M258.5 218.5L257.6 224.4M484.7 182.3L491.9 183.1M237.9 229.5L244.2 240.7M420.5 408.1L411.6 399.2M443.6 326.1L432.3 318.6M341.8 409.8L339.9 411.7M253.3 213.8L258.4 206.2M462.5 455.0L465.0 444.9M377.3 294.8L375.7 310.4M337.3 391.0L342.0 399.6M360.7 364.4L358.1 355.4M288.9 442.2L286.0 446.3M307.0 161.8L310.1 154.4M398.6 410.1L388.0 405.9M357.7 195.2L351.8 201.7M402.1 311.5L406.9 317.3M326.5 296.5L319.6 289.8M247.5 424.9L239.3 414.9M337.5 293.7L336.0 283.5M334.0 274.2L335.4 277.7M260.0 461.4L265.8 461.8M294.1 335.8L303.9 327.6M386.1 317.6L379.1 328.6M342.4 422.2L335.4 420.1M259.6 349.2L256.6 367.1M247.9 229.3L248.8 228.8M340.1 468.9L325.6 478.0M369.8 192.6L373.9 192.8M377.1 393.8L366.9 403.3M485.8 192.6L492.7 189.3M484.2 265.1L498.7 255.8M449.5 277.1L446.8 264.9M478.3 327.7L487.9 335.2M379.5 162.4L364.3 166.7M445.0 177.3L454.6 170.1M210.8 289.9L218.0 295.6M409.4 261.1L404.8 267.9M363.6 260.7L365.3 270.7M402.1 311.5L393.6 313.0M294.1 335.8L284.5 331.8M262.5 444.8L276.2 441.9M464.4 407.3L453.6 415.7M469.5 421.8L469.3 412.2M400.9 191.5L404.9 206.1M286.8 393.3L293.2 401.2M376.8 497.2L363.2 481.5M487.0 212.5L472.4 214.5M325.6 478.0L337.4 488.3M425.8 155.8L436.0 162.0M332.6 236.4L325.6 243.0M487.9 335.2L491.3 341.5M261.7 280.9L252.4 290.8M360.7 364.4L350.0 363.0M495.4 208.1L493.9 196.6M249.0 402.7L244.8 408.1M281.9 216.4L279.4 205.6M469.0 372.1L471.8 374.2M255.2 329.3L259.7 319.7M386.1 317.6L388.4 305.9M339.7 346.3L342.3 356.1M309.6 444.0L305.5 436.3M487.0 212.5L488.5 222.3M303.9 327.6L298.4 318.7M433.9 240.3L437.2 240.8M240.6 219.8L230.0 223.2M433.8 431.1L446.3 429.2M419.6 253.4L424.5 248.3M331.9 289.6L319.6 289.8M377.0 463.7L380.5 452.0M445.0 177.3L451.4 190.0M385.6 408.3L380.5 399.9M275.7 315.4L287.0 308.2M451.4 190.0L440.8 189.5M268.4 221.6L271.7 230.1M281.9 216.4L267.4 212.7M456.6 265.6L449.5 277.1M336.2 455.9L322.6 467.7M484.2 265.1L474.1 260.4M330.1 376.7L323.7 370.3M337.6 431.6L334.0 444.2M492.4 231.6L497.2 218.3M364.3 166.7L358.4 161.3M406.4 322.5L406.9 317.3M456.6 265.6L464.3 280.6M453.6 415.7L446.3 429.2M377.0 258.1L363.6 260.7M334.6 369.2L326.3 368.4M294.1 466.6L282.0 470.4M220.5 243.6L216.5 258.7M295.3 421.4L298.2 429.9M442.6 299.2L436.6 308.8M471.5 365.6L478.9 366.8M331.9 359.2L342.3 356.1M436.0 162.0L444.5 162.9M387.0 289.7L397.5 293.0M393.7 434.0L411.5 441.6M262.5 444.8L248.6 448.7M377.2 478.5L376.8 497.2M366.0 291.3L362.4 285.4M390.0 420.4L385.6 408.3M454.9 165.9L446.6 159.2M218.0 312.9L227.5 308.9M409.1 409.0L417.7 419.3M381.5 193.1L386.9 188.4M290.4 295.8L287.9 285.9M440.4 455.4L452.2 458.6M436.4 305.3L431.8 318.2M273.3 239.1L271.5 237.5M299.3 411.8L301.8 404.3M343.3 494.4L351.6 502.1M231.3 391.4L239.5 394.5M309.1 461.9L308.0 474.7M401.5 299.1L403.3 297.9M265.4 374.3L280.5 373.7M436.3 247.5L437.2 240.8M450.4 167.1L444.5 162.9M390.7 453.9L393.4 443.0M359.5 174.9L343.2 176.1M250.2 437.8L244.9 445.2M268.6 299.0L274.8 305.9M473.3 272.9L474.1 260.4M328.9 255.7L330.4 260.7M469.5 185.1L451.4 190.0M469.3 316.7L482.2 323.8M337.6 431.6L319.5 433.6M212.3 387.4L209.4 382.6M308.0 474.7L299.9 483.6M299.3 411.8L302.4 416.5M322.6 467.7L340.1 468.9M328.9 255.7L327.3 261.9M422.9 219.3L413.4 225.2M379.5 183.3L386.9 188.4M243.9 403.4L248.9 402.3M305.4 370.0L309.6 370.4M508.9 247.7L513.1 244.3M293.2 401.2L301.4 398.2M240.6 266.9L227.6 259.1M409.9 149.4L415.9 148.4M448.2 470.1L448.5 481.1M254.6 302.2L266.5 311.5M404.7 496.9L416.7 493.1M422.8 238.9L413.4 225.2M464.3 280.6L481.3 281.5M407.6 158.9L396.4 165.2M502.6 280.4L505.8 275.5M351.1 384.4L342.1 385.5M288.3 183.5L293.2 193.3M220.5 243.6L235.9 247.2M243.1 359.6L236.9 351.3M399.0 274.5L404.8 267.9M274.7 364.8L275.0 355.5M365.0 158.7L361.8 159.5M322.6 467.7L325.6 478.0M440.3 348.2L445.0 337.3M445.0 337.3L432.9 340.0M449.5 277.1L448.3 286.9M377.4 151.3L385.9 144.2M227.6 259.1L216.5 258.7M377.1 393.8L368.2 389.9M458.7 254.2L447.7 253.4M360.7 364.4L369.7 369.9M329.4 343.1L328.6 343.0M443.2 410.2L453.6 415.7M368.2 389.9L374.7 383.9M319.5 433.6L315.5 428.7M342.7 317.7L355.6 321.6M294.1 335.8L298.4 318.7M504.4 207.6L509.0 203.0M286.7 228.9L276.8 234.9M286.6 275.6L287.9 285.9M377.3 294.8L375.8 280.1M275.7 315.4L266.5 311.5M485.8 192.6L493.9 196.6M455.1 352.0L456.9 331.7M440.9 314.8L431.8 318.2M319.5 433.6L309.6 444.0M413.1 263.6L418.2 260.4M299.9 483.6L305.8 487.0M373.5 504.4L383.3 502.4M343.3 494.4L337.4 488.3M330.0 161.5L318.3 158.2M253.3 213.8L255.1 224.7M395.3 322.1L404.7 327.4M343.6 398.8L337.3 391.0M457.8 445.8L465.0 444.9M434.9 356.5L421.4 347.0M359.2 494.4L343.3 494.4M469.3 316.7L481.1 314.0M212.3 387.4L215.3 388.0M309.2 293.6L319.6 289.8M504.4 207.6L511.1 215.6M409.4 261.1L407.3 244.7M208.5 376.1L210.5 366.1M505.4 265.3L509.6 272.5M509.5 235.0L508.9 247.7M250.3 238.9L250.8 235.6M445.5 256.1L446.8 264.9M403.0 305.1L401.5 299.1M336.2 455.9L334.0 444.2M225.3 374.9L217.3 380.6M480.8 341.0L491.3 341.5M287.0 308.2L274.8 305.9M478.4 294.1L486.1 305.9M420.4 484.2L426.6 491.7M494.3 287.0L490.6 288.9M452.2 458.6L457.9 467.2M456.6 265.6L474.1 260.4M509.5 235.0L490.0 244.7M268.2 268.8L265.1 264.4M433.9 240.3L428.7 226.2M230.0 223.2L227.5 229.8M341.6 377.9L334.6 369.2M239.1 432.6L240.8 435.1M359.2 494.4L368.4 498.6M315.9 307.2L323.2 308.2M377.2 478.5L389.1 474.8M268.4 221.6L262.1 220.3M426.2 335.0L432.9 340.0M352.0 311.0L365.2 310.0M244.6 306.6L237.3 307.8M388.2 184.3L387.0 185.3M374.3 382.3L372.9 366.6M303.9 327.6L311.8 326.7M210.8 289.9L225.3 284.8M456.1 176.8L460.9 175.3M295.0 279.9L286.6 275.6M410.0 390.8L406.3 399.5M300.2 364.2L299.2 376.1M402.1 311.5L395.3 322.1M300.2 364.2L298.7 352.1M264.1 266.6L259.6 260.6M463.9 365.9L464.2 347.6M437.3 222.3L442.5 215.9M475.1 352.6L464.2 347.6M336.4 312.4L332.3 318.4M351.8 201.7L359.1 198.7M251.5 250.2L255.0 252.1M463.9 365.9L455.1 352.0M361.1 462.1L358.0 445.4M431.6 444.5L422.2 442.8M303.9 327.6L303.0 335.7M394.2 340.3L394.5 341.2M379.1 328.6L372.2 337.8M285.8 410.7L295.3 421.4M288.9 206.0L293.2 193.3M383.7 435.9L378.9 427.2M427.1 184.8L440.8 189.5M328.6 351.6L325.3 353.0M307.4 309.2L317.3 318.8M284.8 341.8L284.5 331.8M469.5 185.1L476.2 178.9M363.6 260.7L364.5 261.8M442.6 299.2L436.4 305.3M442.6 299.2L440.9 314.8M475.9 245.9L486.6 255.5M422.9 219.3L432.3 208.7M360.7 364.4L372.9 366.6M254.6 302.2L248.9 315.5M325.6 478.0L319.1 489.6M403.0 305.1L403.3 297.9M279.4 205.6L276.5 202.5M237.9 309.6L244.6 306.6M448.2 470.1L440.4 478.2M361.1 462.1L350.1 456.7M442.2 200.1L449.8 195.4M411.5 441.6L422.2 442.8M402.6 151.4L394.7 153.3M429.9 328.2L432.9 340.0M469.0 372.1L467.5 380.1M293.2 193.3L286.3 184.3M473.7 306.8L461.7 305.3M433.9 240.3L436.3 247.5M218.0 312.9L214.7 304.4M428.7 489.5L426.6 491.7M265.4 374.3L277.4 386.9M377.2 478.5L363.2 481.5M422.9 219.3L437.0 220.2M498.7 255.8L486.6 255.5M341.2 211.8L347.7 207.4M366.0 291.3L377.3 294.8M485.8 192.6L484.7 182.3M377.1 393.8L374.7 383.9M390.0 420.4L390.7 409.5M284.3 196.5L280.8 199.8M425.8 155.8L437.7 155.0M307.4 309.2L298.4 318.7M243.1 359.6L248.2 350.2M437.3 264.4L438.6 273.1M210.8 289.9L208.1 301.0M480.7 233.4L475.9 245.9M484.7 182.3L478.9 177.5M406.4 322.5L395.3 322.1M351.1 384.4L359.4 393.7M277.4 463.2L271.9 469.6M326.5 296.5L315.9 307.2M365.7 269.4L364.5 261.8M317.3 318.8L322.6 315.4M227.6 259.1L244.3 255.3M273.6 333.9L284.8 341.8M399.5 157.7L394.7 153.3M307.0 161.8L299.7 161.8M334.6 369.2L330.1 376.7M419.0 384.8L410.0 390.8M231.3 391.4L242.5 386.2M413.1 188.9L406.6 182.2M434.4 392.0L439.1 376.2M463.9 365.9L469.0 372.1M275.7 315.4L269.6 323.1M356.1 404.5L359.4 393.7M471.5 365.6L471.8 374.2M307.3 232.1L306.8 246.6M256.2 383.9L241.3 372.0M289.3 383.2L299.2 376.1M463.9 365.9L445.1 361.6M309.2 293.6L307.4 309.2M326.5 268.3L331.7 266.3M289.3 383.2L286.8 393.3M478.3 327.7L469.3 316.7M331.8 300.6L325.0 308.8M288.2 458.5L282.0 470.4M251.5 250.2L252.0 258.3M299.7 161.8L291.0 169.4M436.4 305.3L436.6 308.8M487.9 335.2L480.8 341.0M372.2 337.8L357.3 334.7M226.7 299.9L214.7 304.4M294.1 466.6L288.2 458.5M343.3 494.4L344.1 499.6M487.9 335.2L487.8 331.7M329.4 492.6L325.5 493.8M330.0 161.5L343.3 165.0M256.2 383.9L265.4 374.3M387.5 465.2L395.8 461.8M473.7 306.8L464.2 295.1M328.0 280.4L336.0 283.5M259.7 454.7L248.6 448.7M456.6 265.6L447.7 253.4M486.6 255.5L490.0 244.7M337.6 431.6L324.5 426.4M306.8 246.6L293.4 247.9M373.5 445.5L377.0 463.7M485.8 192.6L475.7 205.2M391.1 483.6L389.1 474.8M363.6 260.7L365.7 269.4M277.4 463.2L269.0 465.8M461.7 461.7L457.9 467.2M508.9 247.7L512.9 252.7M430.5 368.3L430.5 379.5M274.3 470.4L279.6 472.8M360.3 419.1L341.8 409.8M443.3 211.4L432.3 208.7M484.2 265.1L491.1 280.9M437.0 220.2L442.5 215.9M299.2 376.1L304.6 389.2M266.2 459.5L277.4 463.2M382.8 226.2L384.3 233.6M217.3 380.6L212.3 387.4M250.2 437.8L262.5 444.8M488.3 179.2L478.9 177.5M279.3 250.2L279.9 243.2M394.6 253.7L393.8 242.8M337.4 205.0L347.7 207.4M328.6 351.6L342.3 356.1M403.5 495.0L407.6 484.1M377.0 258.1L364.5 261.8M342.7 317.7L336.4 314.8M357.7 195.2L342.4 196.0M245.0 330.5L242.7 332.0M365.4 505.9L369.1 508.2M250.5 414.3L239.3 414.9M481.1 314.0L483.8 311.1M250.5 453.8L260.0 461.4M290.4 295.8L287.0 308.2M292.2 433.8L292.2 438.6M464.4 194.1L462.1 202.1M361.1 462.1L363.2 481.5M309.2 293.6L290.4 295.8M459.5 391.8L449.3 384.5M434.9 356.5L430.5 368.3M411.6 399.2L406.3 399.5M299.3 411.8L295.3 421.4M223.7 321.0L226.3 315.5M419.6 253.4L407.3 244.7M393.7 434.0L390.0 420.4M377.7 394.4L374.7 383.9M440.9 314.8L436.6 308.8M334.8 327.7L332.3 318.4M450.4 167.1L454.6 170.1M299.9 483.6L298.2 485.2M357.7 434.6L345.9 446.4M419.0 384.8L421.9 397.7M431.6 444.5L420.1 455.3M373.5 504.4L373.4 506.6M229.2 229.1L227.5 229.8M213.4 335.1L207.2 329.6M328.9 255.7L331.9 245.5M366.9 403.3L360.3 419.1M454.7 312.9L442.6 299.2M337.4 488.3L336.3 494.6M295.3 421.4L302.4 416.5M288.9 319.8L284.5 331.8M407.6 484.1L410.9 492.2M325.0 308.8L333.4 301.3M219.6 335.3L221.7 323.2M469.5 185.1L466.4 176.4M329.4 343.1L339.7 346.3M252.0 258.3L255.0 252.1M396.8 303.6L401.5 299.1M396.7 283.7L400.9 290.2M286.7 228.9L271.7 230.1M387.4 269.8L396.7 283.7M303.0 335.7L306.1 333.2M277.4 386.9L280.5 373.7M226.3 315.5L230.1 313.4M258.2 459.0L260.0 461.4M411.5 441.6L420.1 455.3M303.9 176.6L292.5 176.8M287.0 308.2L297.8 305.9M387.5 465.2L390.7 453.9M235.9 247.2L244.3 255.3M503.1 276.8L502.6 280.4M275.7 199.9L276.5 202.5M420.4 484.2L416.7 493.1M494.3 287.0L490.2 294.8M485.8 192.6L487.0 212.5M259.7 319.7L248.9 315.5M261.5 429.0L273.1 422.0M378.1 405.0L377.7 394.4M299.2 376.1L310.0 379.7M217.3 380.6L209.4 382.6M259.6 349.2L264.0 334.9M475.1 352.6L480.8 341.0M494.3 287.0L490.7 291.7M436.0 162.0L440.9 158.7M384.3 495.6L393.5 497.2M486.6 255.5L474.1 260.4M388.2 184.3L386.9 188.4M374.3 382.3L372.1 376.7M264.4 362.3L275.0 355.5M453.6 415.7L469.3 412.2M303.9 327.6L306.1 333.2M440.4 455.4L431.6 444.5M367.8 184.9L359.5 174.9M276.8 234.9L279.9 243.2M293.2 193.3L284.3 196.5M262.1 413.6L273.1 422.0M231.3 391.4L223.7 395.8M492.4 231.6L488.5 222.3M310.9 324.6L298.4 318.7M420.5 408.1L421.9 397.7M261.6 393.2L254.6 406.0M424.5 248.3L407.3 244.7M228.3 238.3L220.4 239.5M357.1 500.9L365.4 505.9M215.0 262.9L216.5 258.7M256.2 383.9L249.5 395.3M383.7 435.9L373.5 445.5M379.5 162.4L377.4 151.3M289.3 383.2L289.6 367.2M266.2 459.5L260.0 461.4M254.6 406.0L249.5 395.3M285.8 410.7L293.2 401.2M404.9 206.1L396.3 214.7M210.8 289.9L211.3 281.5M244.2 240.7L250.8 235.6M309.2 293.6L315.9 307.2M449.3 384.5L463.6 379.0M329.4 492.6L337.4 488.3M290.9 484.6L298.2 485.2M279.4 205.6L280.8 199.8M398.6 410.1L411.6 428.3M261.7 280.9L270.4 275.0M351.1 384.4L343.6 398.8M286.7 228.9L294.1 218.0M212.3 387.4L223.7 395.8M467.5 380.1L471.8 374.2M208.5 376.1L206.7 375.7M322.2 251.6L328.9 255.7M474.7 225.1L487.0 212.5M467.5 252.9L474.1 260.4M290.4 295.8L278.5 291.1M440.8 189.5L429.3 197.9M255.2 329.3L264.0 334.9M340.9 154.9L335.1 156.7M478.4 294.1L490.6 288.9M252.7 203.8L245.0 203.9M366.0 291.3L366.1 301.3M515.6 224.3L511.1 215.6M479.8 364.1L484.4 358.9M494.3 287.0L502.6 280.4M383.7 435.9L393.4 443.0M443.6 326.1L456.7 321.9M366.8 320.1L375.7 310.4M217.3 380.6L215.3 388.0M463.9 365.9L463.6 379.0M258.5 218.5L262.1 220.3M372.1 376.7L372.9 366.6M484.7 182.3L488.3 179.2M358.0 445.4L350.1 456.7M256.2 383.9L256.6 367.1M404.0 455.1L390.7 453.9M259.6 349.2L271.9 347.1M235.9 247.2L228.3 238.3M372.9 366.6L380.0 357.0M253.3 213.8L252.7 203.8M396.4 165.2L388.5 157.9M279.9 243.2L293.4 247.9M419.0 384.8L423.6 375.6M400.9 191.5L396.8 188.7M409.1 409.0L403.3 400.5M235.8 352.7L235.6 343.9M334.0 274.2L331.7 266.3M288.9 442.2L283.8 436.0M405.5 467.5L419.2 469.9M240.6 284.6L252.5 275.6M235.3 421.6L229.1 417.0M290.4 295.8L295.0 279.9M497.2 218.3L511.1 215.6M249.0 402.7L254.6 406.0M424.2 365.5L421.5 368.7M267.4 212.7L276.5 202.5M434.9 356.5L423.6 356.0M359.5 174.9L358.4 161.3M336.0 283.5L335.4 277.7M396.8 303.6L397.5 293.0M286.7 228.9L298.1 238.2M387.5 465.2L380.5 452.0M290.4 295.8L297.8 305.9M433.8 431.1L422.2 442.8M315.6 239.9L306.8 246.6M384.3 495.6L392.0 499.2M379.5 183.3L381.5 193.1M435.3 173.5L427.1 184.8M314.9 280.4L313.0 259.7M231.3 391.4L229.8 398.6M432.3 208.7L437.0 220.2M288.9 319.8L298.4 318.7M403.0 305.1L396.8 303.6M451.8 295.1L439.1 290.9M432.0 247.4L436.3 247.5M219.2 275.1L215.0 262.9M469.5 185.1L456.1 176.8M218.0 312.9L226.3 315.5M319.5 433.6L323.9 445.0M472.4 214.5L471.3 216.0M303.9 327.6L310.9 324.6M352.0 311.0L350.8 302.4M289.1 478.9L282.0 470.4M342.7 317.7L336.4 312.4M440.3 348.2L445.1 361.6M411.6 399.2L410.0 390.8M456.6 265.6L446.8 264.9M404.8 267.9L413.1 263.6M402.5 336.1L404.7 327.4M278.5 291.1L269.8 287.3M367.9 275.6L364.7 275.7M344.5 330.2L342.7 317.7M431.6 444.5L433.8 431.1M378.1 348.5L387.0 347.6M235.9 247.2L244.2 240.7M208.7 320.4L217.1 327.5M335.3 239.9L335.7 238.7M490.7 291.7L490.6 288.9M440.8 189.5L442.2 200.1M326.6 230.3L332.6 236.4M379.1 328.6L386.6 340.6M219.2 275.1L213.9 264.9M438.1 420.8L432.1 408.9M417.5 260.2L418.2 260.4M437.0 220.2L437.3 222.3M455.1 352.0L440.3 348.2M273.5 450.5L259.7 454.7M235.6 343.9L236.9 351.3M383.7 435.9L370.7 434.4M384.3 233.6L376.2 243.5M377.3 294.8L387.0 289.7M377.0 463.7L363.2 481.5M419.2 469.9L435.1 484.2M361.1 462.1L373.5 445.5M405.5 467.5L395.8 461.8M513.1 244.3L515.6 237.5M459.5 426.0L468.2 420.9M478.4 294.1L481.3 281.5M341.6 377.9L350.0 363.0M459.5 391.8L447.1 393.7M471.5 365.6L479.8 364.1M478.9 366.8L484.4 358.9M326.6 230.3L325.6 243.0M366.0 291.3L359.2 291.9M288.3 183.5L286.3 184.3M358.4 161.3L352.9 159.1M504.4 207.6L495.4 208.1M395.3 322.1L391.4 332.4M366.9 245.9L363.6 260.7M393.4 443.0L380.5 452.0M387.5 465.2L377.2 478.5M315.6 239.9L307.3 232.1M417.5 260.2L419.6 253.4M505.4 265.3L505.8 275.5M440.9 314.8L432.3 318.6M310.9 324.6L307.4 309.2M324.5 426.4L315.5 428.7M250.5 414.3L254.6 406.0M340.9 308.0L352.0 311.0M414.6 379.2L421.5 368.7M276.8 234.9L271.7 230.1M299.3 411.8L293.2 401.2M467.2 429.0L469.5 421.8M484.2 265.1L495.2 271.9M206.6 338.9L213.4 335.1M303.9 176.6L307.0 161.8M380.0 357.0L387.0 347.6M351.6 373.4L364.6 377.3M359.2 494.4L351.6 502.1M444.5 162.9L446.6 159.2M396.4 165.2L406.6 182.2M420.0 197.8L427.1 184.8M252.5 275.6L261.7 280.9M237.9 229.5L230.0 223.2M267.4 212.7L279.4 205.6M259.7 454.7L258.2 459.0M435.0 227.7L428.7 226.2M229.8 398.6L224.3 396.7M386.1 317.6L375.7 310.4M304.5 278.8L295.0 279.9M377.3 294.8L368.4 283.9M247.5 424.9L235.3 421.6M258.5 218.5L253.3 213.8M303.0 335.7L302.5 345.9M339.7 346.3L328.6 351.6M310.0 379.7L309.6 370.4M377.0 258.1L376.2 243.5M281.9 216.4L268.4 221.6M503.1 276.8L495.8 283.8M409.4 261.1L419.6 253.4M474.7 225.1L471.3 216.0M304.9 198.1L308.9 213.2M509.6 272.5L502.6 280.4M241.3 372.0L242.5 386.2M509.5 235.0L513.1 244.3M388.5 157.9L391.8 149.9M340.9 308.0L342.7 317.7M326.5 268.3L334.0 274.2M309.1 461.9L322.6 467.7M481.3 281.5L490.6 288.9M374.4 356.5L380.2 356.0M391.1 483.6L377.2 478.5M207.6 366.9L211.0 359.7M411.6 399.2L421.9 397.7M377.4 151.3L376.7 144.4M379.1 328.6L391.4 332.4M277.7 276.5L269.8 287.3M213.9 264.9L212.7 277.6M465.6 438.7L467.2 429.0M407.6 484.1L398.7 490.4M237.9 229.5L228.3 238.3M399.0 274.5L401.0 280.2M475.9 245.9L467.3 241.8M274.7 364.8L265.4 374.3M269.9 435.6L262.5 444.8M366.8 320.1L357.3 334.7M305.7 436.1L309.6 444.0M331.9 359.2L328.6 351.6M238.8 408.0L237.0 409.2M358.8 301.5L352.0 311.0M378.9 427.2L372.6 412.8M420.4 484.2L435.1 484.2M450.4 167.1L446.6 159.2M215.3 365.7L217.3 380.6M400.9 191.5L396.9 183.8M473.7 306.8L478.4 294.1M437.7 155.0L440.9 158.7M343.3 165.0L340.9 154.9M360.3 419.1L357.7 434.6M312.4 487.8L308.0 474.7M350.0 363.0L342.3 356.1M320.6 454.3L322.6 467.7M375.8 280.1L368.4 283.9M208.5 376.1L209.4 382.6M311.8 326.7L317.3 318.8M364.6 377.3L374.3 382.3M269.9 435.6L283.8 436.0M396.7 283.7L397.5 293.0M294.1 335.8L284.8 341.8M212.3 387.4L218.9 390.9M323.2 197.5L308.9 213.2M208.5 376.1L208.3 367.4M230.7 415.1L239.3 414.9M240.6 266.9L252.5 275.6M266.5 311.5L269.6 323.1M447.1 393.7L443.2 410.2M407.6 484.1L419.2 469.9M221.6 389.1L234.9 378.5M227.5 308.9L226.3 315.5M404.0 455.1L411.5 441.6M429.7 417.8L417.7 419.3M289.3 383.2L299.6 395.8M275.7 315.4L274.8 305.9M494.3 287.0L495.8 283.8M399.5 157.7L402.6 151.4M273.6 333.9L269.6 323.1M252.5 275.6L252.4 290.8M388.5 157.9L379.5 162.4M404.9 206.1L413.1 188.9M445.5 256.1L437.3 264.4M454.7 312.9L443.6 326.1M230.0 223.2L220.4 239.5M372.8 268.0L375.8 280.1M478.4 294.1L490.7 291.7M438.1 420.8L453.6 415.7M416.3 175.1L396.4 165.2M480.7 233.4L488.5 222.3M456.1 176.8L454.6 170.1M410.0 390.8L403.3 400.5M374.4 356.5L378.1 348.5M402.0 226.1L393.4 231.5M443.2 410.2L432.1 408.9M422.9 219.3L428.7 226.2M226.7 299.9L225.3 284.8M247.9 229.3L240.6 219.8M315.6 239.9L325.6 243.0M304.5 278.8L314.9 280.4M475.7 205.2L487.0 212.5M409.1 409.0L406.3 399.5M394.5 341.2L402.5 336.1M434.7 279.4L433.6 274.2M286.8 393.3L277.4 386.9M394.2 340.3L396.8 338.5M428.7 489.5L435.1 484.2M250.2 437.8L246.9 445.0M248.8 228.8L250.8 235.6M475.9 245.9L490.0 244.7M421.4 347.0L423.6 356.0M422.8 238.9L428.7 226.2M342.4 422.2L341.8 409.8M435.0 227.7L437.3 222.3M385.0 249.3L394.6 253.7M335.4 223.1L326.6 230.3M289.6 367.2L286.1 357.3M271.9 469.6L274.3 470.4M402.9 330.0L396.8 338.5M486.7 297.5L478.4 294.1M384.3 495.6L383.3 502.4M459.5 426.0L467.2 429.0M456.1 176.8L451.4 190.0M422.9 219.3L419.7 209.3M327.1 210.7L318.8 220.0M498.7 255.8L508.9 247.7M469.3 412.2L465.7 400.4M434.4 392.0L432.1 408.9M307.9 382.5L307.2 387.8M268.6 299.0L269.8 287.3M464.3 280.6L464.2 295.1M491.9 183.1L488.3 179.2M360.3 419.1L342.4 422.2M486.1 305.9L490.2 294.8M472.4 214.5L471.7 211.0M447.1 393.7L449.3 384.5M498.7 255.8L490.0 244.7M411.5 441.6L393.4 443.0M452.2 458.6L462.5 455.0M458.5 198.1L449.8 195.4M280.8 199.8L276.5 202.5M358.8 301.5L350.8 302.4M322.2 251.6L327.3 261.9M245.0 330.5L255.2 340.5M389.5 146.8L385.9 144.2M429.9 328.2L430.3 324.0M255.2 329.3L269.6 323.1M457.8 445.8L462.5 455.0M277.4 463.2L288.2 458.5M279.3 250.2L284.5 254.7M393.7 434.0L393.4 443.0M299.6 395.8L306.7 393.2M463.6 379.0L466.0 389.1M357.7 195.2L359.1 198.7M367.9 275.6L365.3 270.7M438.6 273.1L433.6 274.2M264.4 362.3L259.6 349.2M388.0 405.9L380.5 399.9M449.1 437.7L457.8 445.8M388.5 157.9L377.4 151.3M240.6 219.8L240.8 210.4M378.1 348.5L380.6 351.4M490.7 291.7L490.2 294.8M380.5 399.9L377.7 394.4M343.0 214.6L347.7 207.4M328.0 280.4L331.9 289.6M335.8 233.3L335.7 238.7M237.9 309.6L248.9 315.5M511.2 202.6L509.0 203.0M417.5 260.2L413.1 263.6M268.6 299.0L254.6 302.2M277.4 463.2L274.3 470.4M255.1 224.7L257.6 224.4M368.6 347.6L374.4 356.5M365.7 269.4L365.3 270.7M394.2 340.3L390.1 344.7M307.3 232.1L298.1 238.2M443.6 326.1L430.3 324.0M448.3 286.9L439.1 290.9M236.7 301.1L244.6 306.6M300.2 364.2L305.0 360.2M266.2 459.5L269.0 465.8M419.6 253.4L418.2 260.4M387.4 269.8L375.8 280.1M322.6 315.4L325.0 308.8M336.2 455.9L340.1 468.9M254.6 406.0L244.8 408.1M334.2 497.2L351.6 502.1M267.4 212.7L258.4 206.2M357.1 500.9L351.6 502.1M284.5 254.7L280.9 258.5M427.1 184.8L413.1 188.9M274.7 364.8L280.5 373.7M396.9 183.8L396.9 177.6M305.0 360.2L298.7 352.1M331.8 300.6L333.4 301.3M301.6 425.2L302.4 416.5M464.4 194.1L472.4 197.7M327.1 210.7L341.2 211.8M267.2 204.5L258.4 206.2M383.7 435.9L390.0 420.4M326.5 268.3L327.3 261.9M366.9 245.9L368.9 238.8M388.5 157.9L399.5 157.7M393.5 497.2L398.7 490.4M355.1 344.9L358.1 355.4M329.4 492.6L334.2 497.2M456.9 331.7L467.5 329.1M387.1 171.8L379.5 183.3M467.2 429.0L466.5 427.9M409.4 261.1L413.1 263.6M275.6 398.8L275.6 409.2M247.9 229.3L250.8 235.6M384.3 495.6L376.8 497.2M435.3 173.5L436.0 162.0M286.5 263.7L279.8 262.8M436.0 162.0L425.2 167.2M380.6 351.4L387.0 347.6M208.7 320.4L221.7 323.2M509.5 235.0L515.6 224.3M307.3 232.1L308.9 213.2M328.0 280.4L335.4 277.7M475.9 245.9L474.1 260.4M416.3 175.1L413.1 188.9M402.0 226.1L409.3 233.3M254.6 406.0L262.1 413.6M421.9 397.7L432.1 408.9M433.9 240.3L432.0 247.4M400.9 191.5L406.6 182.2M469.5 185.1L485.8 192.6M366.1 301.3L375.7 310.4M318.3 158.2L310.1 154.4M292.2 433.8L298.2 429.9M339.9 411.7L331.0 421.8M309.1 461.9L294.1 466.6M236.7 301.1L252.4 290.8M331.0 421.8L328.4 423.5M437.5 468.1L440.4 478.2M331.7 266.3L330.4 260.7M264.0 334.9L269.6 323.1M466.9 201.8L475.7 205.2M247.5 424.9L261.5 429.0M265.4 374.3L256.6 367.1M269.9 435.6L276.2 441.9M282.0 470.4L274.3 470.4M407.3 244.7L409.3 233.3M330.4 260.7L331.4 255.5M286.8 393.3L299.6 395.8M318.3 158.2L314.6 167.3M374.4 356.5L358.1 355.4M250.5 453.8L259.7 454.7M206.6 338.9L215.2 339.2M293.8 349.0L302.5 345.9M449.1 437.7L465.6 438.7M246.9 207.0L240.8 210.4M308.0 474.7L325.6 478.0M288.9 206.0L284.3 196.5M422.8 238.9L433.9 240.3M294.1 335.8L298.5 342.5M309.1 461.9L300.7 453.3M505.4 265.3L510.8 257.9M284.5 254.7L286.5 263.7M396.3 214.7L407.9 217.0M456.1 176.8L445.0 177.3M326.0 178.9L343.2 176.1M495.2 271.9L495.8 283.8M459.5 426.0L453.6 415.7M442.2 200.1L449.4 197.1M485.5 355.4L484.4 358.9M449.8 370.4L439.1 376.2M422.8 238.9L409.3 233.3M258.4 206.2L252.7 203.8M455.1 352.0L445.0 337.3M401.5 299.1L397.5 293.0M388.5 146.2L388.5 157.9M382.8 226.2L391.2 221.9M451.8 295.1L464.3 280.6M351.6 373.4L341.6 377.9M300.7 453.3L309.6 444.0M387.1 171.8L372.6 175.4M450.4 167.1L454.9 165.9M437.7 155.0L446.6 159.2M463.9 365.9L471.5 365.6M475.1 352.6L471.5 365.6M239.3 414.9L237.0 409.2M478.3 327.7L467.5 329.1M281.1 269.7L279.8 262.8M464.3 280.6L449.5 277.1M342.1 385.5L341.6 377.9M331.9 359.2L326.3 368.4M429.7 417.8L432.1 408.9M461.7 461.7L462.5 455.0M434.9 356.5L432.9 340.0M323.2 308.2L322.6 315.4M301.8 404.3L301.4 398.2M264.1 266.6L265.1 264.4M209.0 309.3L205.5 313.5M300.0 209.0L294.1 218.0M222.7 358.0L211.7 360.6M318.3 491.2L325.5 493.8M396.7 283.7L401.0 280.2M440.4 455.4L448.4 448.8M378.1 405.0L385.6 408.3M239.5 394.5L242.5 386.2M325.5 493.8L334.2 497.2M393.8 242.8L393.4 231.5M215.3 365.7L208.5 376.1M420.0 197.8L419.7 209.3M341.2 211.8L337.4 205.0M220.5 243.6L227.6 259.1M503.1 276.8L505.8 275.5M358.8 301.5L359.2 291.9M497.2 218.3L495.4 208.1M299.9 483.6L289.1 478.9M515.6 224.3L517.3 231.2M391.4 332.4L386.6 340.6M275.0 355.5L271.9 347.1M385.0 249.3L384.3 233.6M355.1 344.9L342.3 356.1M307.3 232.1L326.6 230.3M382.8 226.2L393.4 231.5M286.6 275.6L281.1 269.7M300.2 364.2L305.4 370.0M227.5 229.8L220.4 239.5M267.4 212.7L258.5 218.5M214.7 304.4L207.8 308.5M449.1 437.7L448.4 448.8M330.1 376.7L326.3 368.4M411.5 441.6L422.7 429.4M220.4 239.5L217.8 243.6M359.4 393.7L364.6 377.3M297.0 168.2L292.5 176.8M367.8 184.9L379.5 183.3M289.6 367.2L300.2 364.2M394.5 341.2L396.8 338.5M438.1 420.8L443.2 410.2M337.6 431.6L348.4 429.3M375.8 280.1L367.9 275.6M286.8 393.3L285.8 410.7M485.8 192.6L472.4 197.7M215.0 262.9L213.9 264.9M396.8 338.5L402.5 336.1M449.8 370.4L445.1 361.6M264.4 362.3L265.4 374.3M388.5 157.9L394.7 153.3M328.0 280.4L334.0 274.2M497.2 218.3L504.4 207.6M266.2 459.5L265.8 461.8M286.7 228.9L297.0 227.7M385.0 249.3L377.0 258.1M219.2 275.1L225.3 284.8M208.7 320.4L218.0 312.9M456.9 331.7L464.2 347.6M275.6 409.2L273.1 422.0M286.7 228.9L279.9 243.2M345.9 485.9L340.1 468.9M331.4 255.5L331.9 245.5M288.9 206.0L280.8 199.8M388.4 305.9L396.8 303.6M491.1 280.9L495.8 283.8M360.3 419.1L356.1 404.5M276.2 441.9L286.0 446.3M484.5 307.6L473.7 306.8M387.0 289.7L388.4 305.9M484.8 323.2L483.8 311.1M341.6 377.9L330.1 376.7M277.7 276.5L286.6 275.6M503.1 276.8L495.2 271.9M498.7 255.8L505.4 265.3M497.2 218.3L509.5 235.0M208.7 320.4L209.0 309.3M225.3 284.8L218.0 295.6M453.1 250.7L458.7 254.2M299.6 395.8L304.6 389.2M352.0 311.0L342.7 305.3M299.6 395.8L301.4 398.2M372.8 268.0L365.3 270.7M206.6 338.9L212.3 345.8M430.5 379.5L423.6 375.6M269.9 435.6L261.5 429.0M224.3 396.7L223.7 395.8M340.1 468.9L350.1 456.7M301.1 263.7L293.4 247.9M373.5 445.5L380.5 452.0M379.5 183.3L372.6 175.4M309.2 293.6L295.0 279.9M332.6 236.4L335.3 239.9M217.1 327.5L221.7 323.2M366.9 245.9L360.3 252.6M306.8 246.6L313.0 259.7M511.2 202.6L516.2 205.7M335.4 420.1L339.9 411.7M411.6 428.3L417.7 419.3M238.8 408.0L244.8 408.1M300.0 209.0L308.9 213.2M255.1 224.7L248.8 228.8M308.0 474.7L294.1 466.6M324.5 426.4L328.4 423.5M240.6 219.8L237.9 229.5M246.9 445.0L244.9 445.2M453.6 415.7L468.2 420.9M473.7 306.8L483.8 311.1M368.9 238.8L361.7 242.2M397.5 293.0L403.3 297.9M387.5 465.2L389.1 474.8M476.2 178.9L466.4 176.4M294.1 218.0L308.9 213.2M367.8 184.9L372.6 175.4M235.8 352.7L236.9 351.3M434.9 356.5L440.3 348.2M466.0 389.1L466.4 396.4M432.3 208.7L419.7 209.3M211.7 360.6L210.5 366.1M220.5 243.6L228.3 238.3M409.9 149.4L415.7 148.8M235.3 421.6L235.2 423.6M463.9 365.9L449.8 370.4M432.3 318.6L431.8 318.2M210.5 366.1L208.3 367.4M403.5 495.0L410.9 492.2M334.2 497.2L344.1 499.6M442.2 200.1L446.3 210.6M319.0 314.2L315.9 307.2M246.9 207.0L252.7 203.8M308.0 474.7L305.8 487.0M259.7 319.7L266.5 311.5M287.0 308.2L298.4 318.7M402.9 330.0L404.7 327.4M344.1 499.6L351.6 502.1M290.4 295.8L274.8 305.9M305.0 360.2L305.4 359.9M437.5 468.1L435.1 484.2M420.4 484.2L418.5 492.3M448.2 470.1L457.6 471.8M242.9 341.3L245.0 330.5M334.8 327.7L344.5 330.2M214.7 304.4L209.0 309.3M331.9 289.6L336.0 283.5M322.2 251.6L331.9 245.5M388.5 146.2L389.5 146.8M387.4 269.8L399.0 274.5M286.5 263.7L280.9 258.5M330.0 161.5L335.1 156.7M442.2 200.1L429.3 197.9M458.5 198.1L462.1 202.1M380.2 356.0L380.6 351.4M217.8 243.6L216.5 258.7M357.7 434.6L348.4 429.3M387.4 269.8L404.8 267.9M342.7 317.7L332.3 318.4M390.1 344.7L394.5 341.2M428.7 226.2L437.3 222.3M480.7 233.4L470.0 230.6M276.8 234.9L271.5 237.5M301.1 263.7L286.6 275.6M378.1 405.0L372.6 412.8M396.4 165.2L399.5 157.7M250.3 238.9L244.2 240.7M326.0 178.9L314.6 167.3M427.1 184.8L429.3 197.9M282.5 422.3L273.1 422.0M420.0 197.8L413.1 188.9M294.1 335.8L303.0 335.7M430.5 368.3L424.2 365.5M219.2 275.1L212.7 277.6M470.0 230.6L467.3 241.8M387.1 171.8L388.2 184.3M221.6 389.1L215.3 388.0M293.8 349.0L298.7 352.1M320.6 454.3L336.2 455.9M317.6 187.2L314.6 167.3M284.8 341.8L298.5 342.5M422.7 429.4L417.7 419.3M402.1 311.5L396.8 303.6M492.7 189.3L493.9 196.6M454.7 312.9L469.3 316.7M297.0 168.2L291.0 169.4M336.2 455.9L350.1 456.7M495.8 283.8L502.6 280.4M364.6 377.3L372.1 376.7M335.4 223.1L337.0 228.9M352.0 311.0L355.6 321.6M374.4 356.5L372.9 366.6M511.1 215.6L516.2 205.7M367.8 184.9L369.8 192.6M505.4 265.3L510.2 270.6M464.3 280.6L478.4 294.1M309.2 293.6L314.9 280.4M475.7 205.2L471.7 211.0M366.9 245.9L360.3 251.9M292.2 433.8L283.8 436.0M416.3 175.1L427.1 184.8M396.7 283.7L399.0 274.5M266.5 311.5L274.8 305.9M414.6 379.2L415.9 380.2M359.2 494.4L357.1 500.9M301.8 404.3L293.2 401.2M436.5 294.5L436.2 300.9M369.7 369.9L364.6 377.3M340.1 468.9L337.4 488.3M261.6 393.2L275.6 398.8M444.5 162.9L440.9 158.7M421.4 347.0L432.9 340.0M425.8 155.8L415.7 148.8M303.9 176.6L293.2 193.3M319.0 314.2L323.2 308.2M453.8 403.9L453.6 415.7M469.5 185.1L484.7 182.3M259.7 454.7L260.0 461.4M252.5 275.6L259.6 260.6M279.9 243.2L276.3 248.6M264.1 266.6L268.2 268.8M221.6 389.1L231.3 391.4M474.7 225.1L472.4 214.5M310.9 324.6L317.3 318.8M261.5 429.0L262.5 444.8M209.0 309.3L207.8 308.5M312.4 487.8L319.1 489.6M435.3 173.5L440.8 189.5M377.3 294.8L366.1 301.3M235.9 247.2L227.6 259.1M420.5 408.1L409.1 409.0M305.7 436.1L305.5 436.3M368.6 347.6L372.2 337.8M413.4 225.2L428.7 226.2M330.0 161.5L314.6 167.3M391.2 221.9L396.3 214.7M434.4 392.0L443.2 410.2M261.7 280.9L264.1 266.6M511.1 215.6L520.9 213.4M307.4 309.2L297.8 305.9M293.2 193.3L300.0 209.0M404.0 455.1L395.8 461.8M474.7 225.1L488.5 222.3M264.4 362.3L256.6 367.1M448.5 481.1L442.6 483.1M452.2 458.6L461.7 461.7M297.0 168.2L307.0 161.8M340.9 308.0L342.7 305.3M289.3 383.2L280.5 373.7M396.9 183.8L394.8 183.4M474.7 225.1L470.5 222.2M456.9 331.7L456.7 321.9M327.1 210.7L335.4 223.1M273.6 333.9L264.0 334.9M328.0 280.4L326.5 268.3M466.5 427.9L469.5 421.8M420.1 455.3L419.2 469.9M509.6 272.5L505.8 275.5M337.0 228.9L338.5 223.9M487.0 212.5L495.4 208.1M242.9 341.3L242.7 332.0M509.5 235.0L515.6 237.5M214.7 304.4L218.0 295.6M319.5 433.6L324.5 426.4M468.2 420.9L469.5 421.8M466.9 201.8L464.4 194.1M366.9 245.9L376.2 243.5M358.8 301.5L365.2 310.0M294.1 335.8L288.9 319.8M442.9 484.0L442.6 483.1M508.9 247.7L490.0 244.7M239.5 394.5L229.8 398.6M259.7 319.7L269.6 323.1M344.5 330.2L355.6 321.6M364.3 166.7L361.8 159.5M452.2 458.6L457.8 445.8M315.6 239.9L326.6 230.3M304.6 389.2L307.2 387.8M430.5 368.3L423.6 375.6M278.5 291.1L287.9 285.9M273.1 422.0L283.8 436.0M327.3 261.9L331.7 266.3M430.5 379.5L439.1 376.2M458.5 198.1L464.4 194.1M379.5 183.3L388.2 184.3M335.4 223.1L318.8 220.0M423.6 356.0L424.2 365.5M449.1 437.7L431.6 444.5M393.5 497.2L392.0 499.2M344.5 330.2L357.3 334.7M206.8 291.4L206.9 301.6M438.1 246.7L436.3 247.5M432.0 247.4L424.5 248.3M491.1 280.9L490.6 288.9M391.1 483.6L384.3 495.6M244.2 240.7L244.3 255.3M289.6 367.2L299.2 376.1M364.6 377.3L368.2 389.9M407.6 484.1L420.4 484.2M345.9 485.9L359.2 494.4M298.2 485.2L305.8 487.0M434.4 392.0L449.3 384.5M248.2 350.2L255.2 340.5M484.8 323.2L482.2 323.8M299.6 395.8L293.2 401.2M404.9 206.1L407.9 217.0M420.1 455.3L428.7 462.5M471.8 374.2L478.9 366.8M437.5 468.1L440.4 455.4M420.4 484.2L410.9 492.2M219.2 275.1L211.3 281.5M247.5 424.9L250.5 414.3M416.7 493.1L426.6 491.7M454.6 170.1L454.9 165.9M372.8 268.0L364.5 261.8M478.4 294.1L464.2 295.1M405.5 467.5L420.1 455.3M384.3 233.6L393.8 242.8M318.8 220.0L308.9 213.2M245.0 203.9L239.9 205.7M256.2 383.9L242.5 386.2M250.5 414.3L261.5 429.0M376.2 243.5L373.0 232.7M355.6 321.6L365.2 310.0M509.5 235.0L517.3 231.2M298.4 318.7L297.8 305.9M217.1 327.5L219.6 335.3M377.4 151.3L369.6 158.5M471.3 216.0L470.5 222.2M337.6 431.6L328.4 423.5M273.6 333.9L271.9 347.1M279.9 243.2L273.3 239.1M243.1 359.6L241.3 372.0M236.7 301.1L227.5 308.9M295.0 279.9L287.9 285.9M466.4 176.4L460.9 175.3M436.6 308.8L431.8 318.2M366.8 320.1L365.2 310.0M426.2 335.0L428.2 331.8M418.5 492.3L416.7 493.1M285.8 410.7L299.3 411.8M386.6 340.6L387.0 347.6M258.3 204.7L252.7 203.8M304.5 278.8L313.0 259.7M391.2 221.9L393.4 231.5M386.9 188.4L387.0 185.3M288.9 319.8L287.0 308.2M459.5 426.0L465.6 438.7M478.3 327.7L480.8 341.0M383.7 435.9L393.7 434.0M398.6 410.1L390.0 420.4M478.3 327.7L487.8 331.7M262.1 413.6L275.6 409.2M345.9 446.4L334.0 444.2M231.3 391.4L234.9 378.5M402.9 330.0L402.5 336.1M259.6 349.2L255.2 340.5M281.9 216.4L286.7 228.9M360.7 364.4L374.4 356.5M448.2 470.1L452.7 479.7M457.8 445.8L465.6 438.7M275.6 398.8L277.4 386.9M307.9 382.5L310.0 379.7M442.9 484.0L448.5 481.1M208.1 301.0L206.9 301.6M366.9 403.3L377.7 394.4M455.0 474.0L457.6 471.8M331.9 289.6L337.5 293.7M238.8 408.0L239.3 414.9M364.3 166.7L372.6 175.4M315.6 239.9L322.2 251.6M388.5 146.2L391.8 149.9M261.6 393.2L277.4 386.9M377.2 478.5L377.0 463.7M277.7 276.5L287.9 285.9M405.5 467.5L389.1 474.8M279.3 250.2L276.3 248.6M384.3 495.6L377.2 478.5M458.5 198.1L458.6 199.4M380.2 356.0L380.0 357.0M517.3 231.2L515.6 237.5M429.9 328.2L428.2 331.8M484.8 323.2L481.1 314.0M259.6 260.6L252.0 258.3M409.3 233.3L393.8 242.8M436.0 162.0L437.7 155.0M503.1 276.8L505.4 265.3M336.3 494.6L334.2 497.2M390.1 344.7L387.0 347.6M413.4 225.2L409.3 233.3M396.7 283.7L387.0 289.7M492.7 189.3L491.9 183.1M440.9 314.8L443.6 326.1M249.2 324.5L255.2 329.3M265.1 264.4L262.0 262.2M379.5 162.4L372.6 175.4M212.3 345.8L210.0 346.3M215.3 365.7L222.7 358.0M225.3 374.9L234.9 378.5M312.4 487.8L325.6 478.0M292.5 176.8L291.0 169.4M315.9 307.2L319.6 289.8M403.5 495.0L398.7 490.4M385.0 249.3L393.8 242.8M455.1 352.0L445.1 361.6M351.6 373.4L350.0 363.0M492.4 231.6L490.0 244.7M367.8 184.9L357.7 195.2M293.2 193.3L292.5 176.8M211.0 359.7L211.7 360.6M497.2 218.3L515.6 224.3M343.3 494.4L336.3 494.6M289.3 383.2L277.4 386.9M473.7 306.8L481.1 314.0M368.4 498.6L373.5 504.4M468.7 339.8L467.5 329.1M318.8 220.0L326.6 230.3M286.8 393.3L275.6 398.8M372.8 268.0L365.7 269.4M297.0 168.2L299.7 161.8M230.7 415.1L235.3 421.6M300.7 453.3L288.2 458.5M422.7 429.4L429.7 417.8M246.9 207.0L239.9 205.7M438.1 420.8L429.7 417.8M487.0 212.5L493.9 196.6M420.0 197.8L429.3 197.9M452.2 458.6L448.4 448.8M390.7 453.9L395.8 461.8M446.6 159.2L440.9 158.7M366.9 245.9L361.7 242.2M456.9 331.7L443.6 326.1M457.8 445.8L448.4 448.8M336.2 455.9L323.9 445.0M484.2 265.1L481.3 281.5M409.4 261.1L394.6 253.7M428.7 489.5L420.4 484.2M411.6 399.2L409.1 409.0M267.4 212.7L262.1 220.3M240.6 219.8L255.1 224.7M248.9 315.5L244.6 306.6M402.0 226.1L396.3 214.7M335.4 223.1L343.0 214.6M310.9 324.6L311.8 326.7M347.5 186.6L367.8 184.9M430.5 368.3L439.1 376.2M443.3 211.4L442.2 200.1M394.2 340.3L386.6 340.6M358.1 355.4L350.0 363.0M342.1 385.5L343.6 398.8M261.7 280.9L268.2 268.8M239.5 394.5L243.9 403.4M453.8 403.9L443.2 410.2M495.2 271.9L498.7 255.8M497.2 218.3L487.0 212.5M394.8 183.4L396.8 188.7M242.9 341.3L248.2 350.2M435.3 173.5L444.5 162.9M459.5 391.8L453.8 403.9M262.5 444.8L259.7 454.7M282.0 470.4L279.6 472.8M410.9 492.2L416.7 493.1M337.0 228.9L335.8 233.3M486.7 297.5L490.2 294.8M468.2 420.9L466.5 427.9M463.6 379.0L467.5 380.1M264.0 334.9L271.9 347.1M334.6 369.2L350.0 363.0M483.8 311.1L486.1 305.9M271.7 230.1L271.5 237.5M329.4 343.1L328.6 351.6M279.3 250.2L293.4 247.9M422.8 238.9L432.0 247.4M250.2 437.8L247.5 424.9M454.7 312.9L451.8 295.1M361.1 462.1L377.0 463.7M407.6 158.9L425.2 167.2M451.8 295.1L461.7 305.3M364.3 166.7L365.0 158.7M391.8 149.9L389.5 146.8M345.9 485.9L363.2 481.5M208.7 320.4L205.5 313.5M304.6 389.2L306.7 393.2M473.3 272.9L481.3 281.5M251.5 250.2L244.2 240.7M373.5 445.5L358.0 445.4M374.4 356.5L380.6 351.4M434.9 356.5L424.2 365.5M268.6 299.0L252.4 290.8M422.9 219.3L407.9 217.0M249.0 402.7L248.9 402.3M404.0 455.1L393.4 443.0M342.4 422.2L348.4 429.3M360.3 419.1L372.6 412.8M388.5 146.2L377.4 151.3M289.6 367.2L274.7 364.8M319.0 314.2L317.3 318.8M241.3 372.0L256.6 367.1M275.7 315.4L284.5 331.8M259.6 260.6L262.0 262.2M332.6 236.4L335.7 238.7M345.9 446.4L358.0 445.4M329.4 492.6L319.1 489.6M281.1 269.7L278.9 269.7M402.0 226.1L391.2 221.9M240.6 219.8L248.8 228.8M368.4 498.6L376.8 497.2M229.2 229.1L228.3 238.3M434.4 392.0L447.1 393.7M360.7 364.4L351.6 373.4M250.2 437.8L261.5 429.0M323.2 308.2L325.0 308.8M237.9 229.5L229.2 229.1M431.6 444.5L448.4 448.8M264.1 266.6L262.0 262.2M373.0 232.7L368.9 238.8M309.2 293.6L304.5 278.8M214.7 304.4L208.1 301.0M269.0 465.8L260.0 461.4M294.1 466.6L300.7 453.3M303.9 176.6L304.9 198.1M345.9 446.4L348.4 429.3M430.5 368.3L445.1 361.6M394.6 253.7L404.8 267.9M358.1 355.4L342.3 356.1M252.0 258.3L244.3 255.3M243.1 359.6L235.8 352.7M236.7 301.1L237.3 307.8M432.3 208.7L429.3 197.9M225.3 284.8L211.3 281.5M331.9 359.2L325.3 353.0M359.4 393.7L368.2 389.9M358.8 301.5L350.7 302.3M273.5 450.5L276.2 441.9M243.1 359.6L256.6 367.1M292.2 433.8L295.3 421.4M240.6 266.9L240.6 284.6M242.9 341.3L235.6 343.9M449.5 277.1L438.6 273.1M373.5 504.4L365.4 505.9M249.2 324.5L245.0 330.5M337.6 431.6L331.0 421.8M273.5 450.5L282.1 451.1M377.0 258.1L394.6 253.7M270.4 275.0L268.2 268.8M468.7 339.8L464.2 347.6M422.8 238.9L424.5 248.3M303.0 335.7L298.5 342.5M276.8 234.9L273.3 239.1M402.9 330.0L391.4 332.4M334.6 369.2L342.3 356.1M445.5 256.1L447.7 253.4M451.8 295.1L464.2 295.1M312.4 487.8L305.8 487.0M485.5 355.4L480.8 341.0M440.4 455.4L428.7 462.5M407.6 484.1L389.1 474.8M241.3 372.0L231.6 359.2M258.3 204.7L258.4 206.2M440.4 478.2L442.6 483.1M443.3 211.4L442.5 215.9M247.5 424.9L239.1 430.4M285.8 410.7L275.6 409.2M515.6 224.3L520.9 213.4M323.9 445.0L309.6 444.0M286.1 357.3L300.2 364.2M449.1 437.7L446.3 429.2M419.2 469.9L428.7 462.5M425.8 155.8L407.6 158.9M388.4 305.9L397.5 293.0M434.4 392.0L421.9 397.7M360.3 419.1L370.7 434.4M240.6 284.6L225.3 284.8M215.3 388.0L218.9 390.9M217.3 380.6L208.5 376.1M423.6 375.6L421.5 368.7M242.5 386.2L249.5 395.3M343.3 165.0L351.3 157.3M387.1 171.8L379.5 162.4M474.7 225.1L470.0 230.6M388.4 305.9L375.7 310.4M208.1 301.0L206.8 291.4M208.7 320.4L207.2 329.6M218.9 390.9L223.7 395.8M373.4 506.6L383.3 502.4M343.3 165.0L359.5 174.9M455.0 474.0L452.7 479.7M243.1 359.6L231.6 359.2M240.8 210.4L239.9 205.7M453.8 403.9L465.7 400.4M295.3 421.4L301.6 425.2M366.9 403.3L356.1 404.5M442.6 299.2L439.1 290.9M383.3 502.4L392.0 499.2M377.9 143.8L385.9 144.2M214.7 304.4L227.5 308.9M368.4 283.9L362.4 285.4M469.5 185.1L464.4 194.1M409.3 233.3L393.4 231.5M325.6 243.0L331.9 245.5M434.4 392.0L430.5 379.5M276.2 441.9L283.8 436.0M449.4 197.1L449.8 195.4M307.0 161.8L314.6 167.3M335.1 188.3L342.4 196.0M467.5 252.9L458.7 254.2M375.7 310.4L365.2 310.0M351.1 384.4L341.6 377.9M297.0 227.7L307.3 232.1M480.7 233.4L467.3 241.8M422.7 429.4L411.6 428.3M257.6 224.4L262.1 220.3M293.8 349.0L284.8 341.8M332.6 236.4L335.8 233.3M451.8 295.1L448.3 286.9M420.4 484.2L419.2 469.9M369.7 369.9L372.1 376.7M304.9 198.1L293.2 193.3M432.3 208.7L442.2 200.1M463.9 365.9L475.1 352.6M284.8 341.8L286.1 357.3M335.4 420.1L331.0 421.8M440.4 455.4L448.2 470.1M439.1 290.9L436.5 294.5M246.9 445.0L248.6 448.7M403.3 297.9L400.9 290.2M397.5 293.0L400.9 290.2M495.2 271.9L505.4 265.3M494.3 287.0L491.1 280.9M400.9 290.2L401.0 280.2M357.7 434.6L370.7 434.4M390.7 453.9L380.5 452.0M255.2 329.3L245.0 330.5M336.4 296.1L337.5 293.7M305.0 360.2L305.4 370.0M361.7 242.2L360.3 251.9M432.3 318.6L430.3 324.0M350.8 302.4L350.7 302.3M223.7 321.0L221.7 323.2M328.0 280.4L319.6 289.8M303.9 176.6L317.6 187.2M336.4 314.8L336.4 312.4M478.3 327.7L482.2 323.8M464.3 280.6L448.3 286.9M246.9 207.0L245.0 203.9M467.5 329.1L456.7 321.9M404.0 455.1L405.5 467.5M391.4 332.4L394.2 340.3M371.3 147.7L376.7 144.4M449.0 208.0L446.3 210.6M487.8 331.7L482.2 323.8M358.8 301.5L366.1 301.3M391.1 483.6L407.6 484.1M360.7 364.4L364.6 377.3M235.3 421.6L239.3 414.9M465.6 438.7L465.0 444.9M242.9 341.3L255.2 340.5M396.9 177.6L394.8 183.4M309.1 461.9L309.6 444.0M388.5 146.2L385.9 144.2M275.0 355.5L259.6 349.2M236.7 301.1L226.7 299.9M407.6 158.9L406.7 150.2M439.1 376.2L445.1 361.6M380.2 356.0L387.0 347.6M217.8 243.6L213.9 264.9M451.4 190.0L449.8 195.4M440.4 478.2L448.5 481.1M279.8 262.8L278.9 269.7M347.5 186.6L342.4 196.0M329.4 492.6L325.6 478.0M449.1 437.7L433.8 431.1M420.0 197.8L404.9 206.1M335.4 223.1L338.5 223.9M288.9 206.0L300.0 209.0M212.3 345.8L215.2 339.2M288.9 206.0L279.4 205.6M215.3 365.7L210.5 366.1M456.6 265.6L445.5 256.1M231.3 391.4L224.3 396.7M480.7 233.4L490.0 244.7M453.1 250.7L447.7 253.4M230.7 415.1L237.0 409.2M410.9 492.2L404.7 496.9M350.7 302.3L342.7 305.3M320.6 454.3L309.6 444.0M221.6 389.1L218.9 390.9M306.7 393.2L307.2 387.8M486.7 297.5L486.1 305.9M366.1 301.3L365.2 310.0M347.5 186.6L359.5 174.9M368.4 498.6L363.2 481.5M394.6 253.7L407.3 244.7M225.3 374.9L226.3 363.3M326.5 296.5L331.8 300.6M248.2 350.2L236.9 351.3M307.2 387.8L310.0 379.7M329.4 492.6L336.3 494.6M250.5 414.3L244.8 408.1M345.9 485.9L343.3 494.4M261.7 280.9L269.8 287.3M449.1 437.7L459.5 426.0M236.7 301.1L240.6 284.6M319.0 314.2L307.4 309.2M368.6 347.6L378.1 348.5M332.6 236.4L333.8 243.2M319.5 433.6L334.0 444.2M396.9 177.6L388.2 184.3M237.9 309.6L237.3 307.8M277.7 276.5L278.9 269.7M289.1 478.9L290.9 484.6M241.3 372.0L234.9 378.5M371.3 147.7L377.4 151.3M374.4 356.5L380.0 357.0M379.1 328.6L375.7 310.4M511.1 215.6L509.0 203.0M342.1 385.5L337.3 391.0M249.0 402.7L243.9 403.4M492.4 231.6L509.5 235.0M240.6 266.9L244.3 255.3M369.6 158.5L365.0 158.7M377.3 294.8L388.4 305.9M239.1 432.6L229.1 417.0M226.7 299.9L227.5 308.9M258.5 218.5L255.1 224.7M484.5 307.6L478.4 294.1M250.5 414.3L262.1 413.6M432.3 208.7L442.5 215.9M342.4 196.0L347.7 207.4M239.5 394.5L249.5 395.3M498.7 255.8L510.8 257.9M288.3 183.5L292.5 176.8M402.6 151.4L404.3 153.3M219.2 275.1L227.6 259.1M395.8 461.8L389.1 474.8M459.5 391.8L466.4 396.4M314.9 280.4L326.5 268.3M448.5 481.1L452.7 479.7M235.2 423.6L239.1 430.4M366.9 403.3L368.2 389.9M340.9 308.0L336.4 312.4M217.1 327.5L207.2 329.6M396.9 183.8L396.8 188.7M356.1 404.5L341.8 409.8M387.4 269.8L394.6 253.7M239.1 430.4L240.8 435.1M396.4 165.2L396.9 177.6M240.6 266.9L225.3 284.8M468.7 339.8L480.8 341.0M509.6 272.5L510.2 270.6M398.6 410.1L409.1 409.0M322.2 251.6L325.6 243.0M368.4 283.9L367.9 275.6M277.7 276.5L278.5 291.1M452.7 479.7L457.6 471.8M468.2 420.9L469.3 412.2M223.7 321.0L218.0 312.9M484.2 265.1L486.6 255.5M347.5 186.6L335.1 188.3M364.3 166.7L369.6 158.5M277.4 463.2L273.5 450.5M213.4 335.1L215.2 339.2M319.1 489.6L318.3 491.2M396.9 177.6L406.6 182.2M266.2 459.5L259.7 454.7M301.1 263.7L313.0 259.7M207.6 366.9L210.5 366.1M484.2 265.1L473.3 272.9M330.0 161.5L343.2 176.1M359.4 393.7L343.6 398.8M399.5 157.7L404.3 153.3M449.3 384.5L439.1 376.2M276.2 441.9L282.1 451.1M275.7 199.9L267.2 204.5M469.3 316.7L467.5 329.1M326.5 296.5L336.4 296.1M466.4 396.4L465.7 400.4M261.6 393.2L265.4 374.3M213.4 335.1L217.1 327.5M327.3 261.9L330.4 260.7M379.5 162.4L369.6 158.5M420.1 455.3L422.2 442.8M469.0 372.1L463.6 379.0M293.8 349.0L298.5 342.5M247.5 424.9L235.2 423.6M318.3 158.2L307.0 161.8M438.1 420.8L446.3 429.2M231.6 359.2L226.3 363.3M270.4 275.0L269.8 287.3M495.2 271.9L491.1 280.9M438.1 246.7L437.2 240.8M218.0 312.9L221.7 323.2M462.5 455.0L463.0 459.7M327.1 210.7L308.9 213.2M206.9 301.6L205.5 313.5M398.6 410.1L390.7 409.5M269.0 465.8L271.9 469.6M366.9 403.3L359.4 393.7M298.5 342.5L302.5 345.9M419.7 209.3L429.3 197.9M445.0 177.3L440.8 189.5M247.9 229.3L244.2 240.7M390.0 420.4L372.6 412.8M342.7 317.7L352.0 311.0M368.4 283.9L364.7 275.7M299.2 376.1L305.4 370.0M286.1 357.3L298.7 352.1M449.4 197.1L449.0 208.0M331.9 289.6L336.4 296.1M337.4 205.0L342.4 196.0M210.8 289.9L206.8 291.4M359.5 174.9L372.6 175.4M413.4 225.2L402.0 226.1M376.2 243.5L368.9 238.8M360.3 419.1L348.4 429.3M347.5 186.6L357.7 195.2M274.7 364.8L286.1 357.3M254.6 302.2L259.7 319.7M328.0 280.4L314.9 280.4M284.5 331.8L269.6 323.1M420.5 408.1L417.7 419.3M387.0 289.7L375.8 280.1M415.7 148.8L415.9 148.4M400.9 191.5L413.1 188.9M242.9 341.3L236.3 342.6M277.7 276.5L270.4 275.0M309.2 293.6L297.8 305.9M304.6 389.2L307.9 382.5M368.6 347.6L358.1 355.4M484.5 307.6L486.1 305.9M312.4 487.8L318.3 491.2M390.7 409.5L388.0 405.9M343.3 165.0L352.9 159.1M301.6 425.2L298.2 429.9M434.9 356.5L445.1 361.6M418.5 492.3L426.6 491.7M385.6 408.3L388.0 405.9M322.6 467.7L308.0 474.7M338.5 223.9L343.0 214.6M336.4 296.1L333.4 301.3M285.8 410.7L275.6 398.8M447.1 393.7L453.8 403.9M391.1 483.6L398.7 490.4M466.9 201.8L462.1 202.1M268.6 299.0L278.5 291.1M402.9 330.0L395.3 322.1M443.6 326.1L432.9 340.0M387.1 171.8L388.5 157.9M208.3 367.4L206.7 375.7M370.7 434.4L358.0 445.4M492.4 231.6L480.7 233.4M406.4 322.5L404.7 327.4M337.6 431.6L345.9 446.4M208.1 301.0L207.8 308.5M268.6 299.0L266.5 311.5M244.9 445.2L248.6 448.7M357.7 434.6L358.0 445.4M220.5 243.6L217.8 243.6M360.3 252.6L360.3 251.9M404.0 455.1L420.1 455.3M337.6 431.6L335.4 420.1M422.7 429.4L433.8 431.1M442.6 299.2L436.2 300.9M355.1 344.9L357.3 334.7M279.3 250.2L280.9 258.5M301.1 263.7L295.0 279.9M286.5 263.7L281.1 269.7M236.3 342.6L235.6 343.9M469.5 185.1L460.9 175.3M406.7 150.2L404.3 153.3M267.4 212.7L267.2 204.5M438.1 420.8L433.8 431.1M437.3 264.4L446.8 264.9M336.3 494.6L344.1 499.6M282.5 422.3L292.2 433.8M493.9 196.6L498.0 204.1M372.8 268.0L377.0 258.1M216.5 258.7L213.9 264.9M467.5 252.9L467.3 241.8M250.5 453.8L248.6 448.7M372.6 412.8L385.6 408.3M422.8 238.9L407.3 244.7M381.5 193.1L373.9 192.8M449.8 370.4L449.3 384.5M215.3 365.7L211.7 360.6M326.3 368.4L322.9 358.3M206.6 338.9L207.2 329.6M391.4 332.4L396.8 338.5M414.6 379.2L423.6 375.6M411.5 441.6L411.6 428.3M282.5 422.3L283.8 436.0M248.2 350.2L259.6 349.2M467.5 252.9L460.8 246.3M413.4 225.2L407.9 217.0M250.2 437.8L240.8 435.1M393.7 434.0L411.6 428.3M434.7 279.4L438.6 273.1M211.0 359.7L210.5 366.1M351.1 384.4L351.6 373.4M337.4 205.0L323.2 197.5M282.5 422.3L285.8 410.7M304.9 198.1L323.2 197.5M334.8 327.7L342.7 317.7M469.5 185.1L472.4 197.7M261.6 393.2L249.5 395.3M306.8 246.6L298.1 238.2M252.5 275.6L264.1 266.6M333.8 243.2L331.9 245.5M221.6 389.1L217.3 380.6M379.5 183.3L373.9 192.8M236.7 301.1L225.3 284.8M456.6 265.6L473.3 272.9M510.8 257.9L512.9 252.7M337.4 205.0L335.1 188.3M262.5 444.8L273.5 450.5M247.9 229.3L237.9 229.5M305.4 370.0L310.0 379.7M273.6 333.9L284.5 331.8M240.6 219.8L253.3 213.8M331.9 359.2L334.6 369.2M323.6 357.2L322.9 358.3M448.2 470.1L455.0 474.0M367.8 184.9L373.9 192.8M363.6 260.7L360.3 252.6M372.8 268.0L387.4 269.8M469.3 316.7L473.7 306.8M218.0 312.9L209.0 309.3M283.8 436.0L292.2 438.6M435.1 484.2L442.6 483.1M284.8 341.8L271.9 347.1M459.5 426.0L446.3 429.2M458.6 199.4L462.1 202.1M475.9 245.9L467.5 252.9M360.3 419.1L378.9 427.2M402.6 151.4L406.7 150.2M326.5 296.5L323.2 308.2M355.1 344.9L344.5 330.2M464.4 407.3L465.7 400.4M289.3 383.2L304.6 389.2M484.7 182.3L492.7 189.3M261.5 429.0L262.1 413.6M288.2 458.5L282.1 451.1M448.2 470.1L457.9 467.2M365.3 270.7L364.7 275.7M440.4 478.2L435.1 484.2M241.3 372.0L225.3 374.9M387.4 269.8L377.0 258.1M320.6 454.3L309.1 461.9M230.7 415.1L229.1 417.0M368.4 498.6L365.4 505.9M386.1 317.6L391.4 332.4M437.5 468.1L419.2 469.9M323.2 197.5L335.1 188.3M322.2 251.6L313.0 259.7M341.8 409.8L343.6 398.8M297.0 227.7L294.1 218.0M449.8 370.4L463.6 379.0M369.1 508.2L373.4 506.6M282.5 422.3L275.6 409.2M433.8 431.1L429.7 417.8M440.8 189.5L449.8 195.4M396.8 303.6L393.6 313.0M419.0 384.8L430.5 379.5M336.4 296.1L331.8 300.6M284.5 254.7L293.4 247.9M464.2 295.1L461.7 305.3M407.6 484.1L405.5 467.5M336.2 455.9L345.9 446.4M370.7 434.4L378.9 427.2M438.6 273.1L446.8 264.9M366.9 403.3L372.6 412.8M239.1 432.6L239.1 430.4M246.9 207.0L253.3 213.8M387.1 171.8L396.4 165.2M319.0 314.2L322.6 315.4M254.6 302.2L244.6 306.6M451.8 295.1L442.6 299.2M383.7 435.9L380.5 452.0M241.3 372.0L226.3 363.3M259.6 260.6L255.0 252.1M341.8 409.8L342.0 399.6M333.8 243.2L335.3 239.9M366.9 403.3L378.1 405.0M249.5 395.3L248.9 402.3M206.9 301.6L207.8 308.5M440.3 348.2L432.9 340.0M398.6 410.1L403.3 400.5M269.0 465.8L265.8 461.8M304.9 198.1L317.6 187.2M459.5 391.8L465.7 400.4M343.3 165.0L343.2 176.1M207.8 308.5L205.5 313.5M437.0 220.2L428.7 226.2M437.5 468.1L428.7 462.5M326.5 268.3L313.0 259.7M452.2 458.6L448.2 470.1M459.5 426.0L466.5 427.9M420.5 408.1L432.1 408.9M297.0 227.7L298.1 238.2M328.6 351.6L328.6 343.0M445.0 177.3L444.5 162.9M359.5 174.9L364.3 166.7M331.9 359.2L322.9 358.3M240.6 266.9L219.2 275.1M234.9 378.5L242.5 386.2M455.1 352.0L464.2 347.6M407.6 158.9L409.9 149.4M403.5 495.0L404.7 496.9M419.7 209.3L407.9 217.0M427.1 184.8L425.2 167.2M456.6 265.6L467.5 252.9M459.5 391.8L463.6 379.0M475.1 352.6L468.7 339.8M464.3 280.6L473.3 272.9M384.3 233.6L373.0 232.7M351.3 157.3L352.9 159.1M387.4 269.8L387.0 289.7M351.1 384.4L364.6 377.3M267.4 212.7L268.4 221.6M407.6 158.9L415.7 148.8M242.9 341.3L236.9 351.3M376.8 497.2L373.5 504.4M319.5 433.6L305.7 436.1M456.6 265.6L458.7 254.2M442.2 200.1L449.0 208.0M431.6 444.5L428.7 462.5M303.9 176.6L297.0 168.2M207.6 366.9L206.7 375.7M276.3 248.6L280.9 258.5M484.7 182.3L476.2 178.9M456.9 331.7L468.7 339.8M484.5 307.6L483.8 311.1M254.6 302.2L252.4 290.8M356.1 404.5L343.6 398.8M298.1 238.2L293.4 247.9M385.6 408.3L390.7 409.5M420.5 408.1L429.7 417.8M280.9 258.5L279.8 262.8M239.3 414.9L244.8 408.1M368.6 347.6L357.3 334.7M431.8 318.2L430.3 324.0M376.8 497.2L383.3 502.4M320.6 454.3L323.9 445.0M335.1 188.3L343.2 176.1M341.2 211.8L343.0 214.6M299.2 376.1L307.9 382.5M416.3 175.1L425.2 167.2M251.5 250.2L244.3 255.3M481.3 281.5L491.1 280.9M443.3 211.4L446.3 210.6M430.3 324.0L428.2 331.8M390.0 420.4L411.6 428.3M377.1 393.8L377.7 394.4M294.1 466.6L299.9 483.6M247.5 424.9L240.8 435.1M445.0 177.3L450.4 167.1M225.3 374.9L221.6 389.1M419.0 384.8L434.4 392.0M297.0 227.7L308.9 213.2M301.1 263.7L306.8 246.6M335.4 223.1L341.2 211.8M451.4 190.0L464.4 194.1M386.1 317.6L393.6 313.0M364.7 275.7L362.4 285.4M208.1 301.0L218.0 295.6M423.6 375.6L415.9 380.2M362.4 285.4L359.2 291.9M396.9 183.8L406.6 182.2M279.9 243.2L298.1 238.2M240.6 284.6L252.4 290.8M288.9 442.2L292.2 438.6M261.6 393.2L256.2 383.9M409.1 409.0L411.6 428.3M301.4 398.2L306.7 393.2M303.9 176.6L314.6 167.3M220.5 243.6L220.4 239.5M434.7 279.4L448.3 286.9M457.9 467.2L457.6 471.8M437.5 468.1L448.2 470.1M475.7 205.2L472.4 197.7M226.3 363.3L222.7 358.0M326.0 178.9L335.1 188.3M442.6 299.2L436.5 294.5M469.3 316.7L456.7 321.9M252.4 290.8L244.6 306.6M317.6 187.2L323.2 197.5M377.9 143.8L376.7 144.4M331.9 359.2L323.6 357.2M454.7 312.9L456.7 321.9M226.7 299.9L218.0 295.6M244.2 240.7L228.3 238.3M407.3 244.7L393.8 242.8M277.4 463.2L282.0 470.4M461.7 461.7L463.0 459.7M368.4 498.6L357.1 500.9M317.6 187.2L335.1 188.3M374.3 382.3L368.2 389.9M436.4 305.3L436.2 300.9M267.2 204.5L276.5 202.5M369.7 369.9L372.9 366.6M391.1 483.6L393.5 497.2M497.2 218.3L488.5 222.3M407.6 158.9L399.5 157.7M351.8 201.7L342.4 196.0M372.2 337.8L386.6 340.6M442.5 215.9L446.3 210.6M508.9 247.7L510.8 257.9M343.3 165.0L335.1 156.7M480.7 233.4L474.7 225.1M475.1 352.6L485.5 355.4M355.1 344.9L339.7 346.3M314.9 280.4L319.6 289.8M419.0 384.8L415.9 380.2M215.3 365.7L225.3 374.9M284.3 196.5L275.7 199.9M478.3 327.7L468.7 339.8M347.5 186.6L343.2 176.1M333.8 243.2L331.4 255.5M289.6 367.2L280.5 373.7M425.8 155.8L425.2 167.2M255.2 329.3L255.2 340.5M350.8 302.4L342.7 305.3M466.9 201.8L471.7 211.0M305.4 359.9L298.7 352.1M223.7 321.0L226.7 317.5M366.8 320.1L372.2 337.8M404.9 206.1L419.7 209.3M336.4 314.8L332.3 318.4M403.0 305.1L402.1 311.5M445.0 177.3L435.3 173.5M277.7 276.5L281.1 269.7M323.6 357.2L325.3 353.0M229.1 417.0L235.2 423.6M206.6 338.9L210.0 346.3M512.9 252.7L513.1 244.3M407.6 158.9L404.3 153.3M323.2 308.2L331.8 300.6M469.3 316.7L461.7 305.3M283.8 436.0L286.0 446.3M475.1 352.6L484.4 358.9M326.6 230.3L335.8 233.3M458.7 254.2L460.8 246.3M307.4 309.2L315.9 307.2M281.9 216.4L271.7 230.1M481.1 314.0L482.2 323.8M387.5 465.2L377.0 463.7M250.5 453.8L258.2 459.0M211.3 281.5L212.7 277.6M240.8 210.4L253.3 213.8M454.7 312.9L461.7 305.3M475.1 352.6L479.8 364.1M275.0 355.5L286.1 357.3M215.3 365.7L226.3 363.3M327.1 210.7L337.4 205.0M326.3 368.4L323.7 370.3M464.4 407.3L469.3 412.2M366.1 301.3L359.2 291.9M432.9 340.0L428.2 331.8M451.4 190.0L458.5 198.1M277.4 463.2L282.1 451.1M469.0 372.1L471.5 365.6M366.8 320.1L379.1 328.6M377.4 151.3L377.9 143.8M402.0 226.1L407.9 217.0M373.5 504.4L369.1 508.2M250.2 437.8L248.6 448.7M229.2 229.1L230.0 223.2M328.9 255.7L331.4 255.5M215.2 339.2L219.6 335.3M221.6 389.1L223.7 395.8M307.3 232.1L318.8 220.0M466.0 389.1L467.5 380.1M449.5 277.1L434.7 279.4M355.1 344.9L368.6 347.6M476.2 178.9L478.9 177.5M345.9 485.9L337.4 488.3M429.9 328.2L443.6 326.1M379.5 183.3L387.0 185.3M274.7 364.8L264.4 362.3M475.7 205.2L472.4 214.5M227.6 259.1L215.0 262.9M326.6 230.3L337.0 228.9M453.8 403.9L464.4 407.3M342.4 422.2L339.9 411.7M486.7 297.5L490.7 291.7M226.3 315.5L226.7 317.5M388.4 305.9L393.6 313.0M281.9 216.4L288.9 206.0M516.2 205.7L509.0 203.0M278.5 291.1L274.8 305.9M293.8 349.0L286.1 357.3M289.1 478.9L298.2 485.2M371.3 147.7L369.6 158.5M409.9 149.4L406.7 150.2M435.3 173.5L425.2 167.2M509.0 203.0L498.0 204.1M275.7 199.9L280.8 199.8M459.5 391.8L466.0 389.1M370.7 434.4L373.5 445.5M304.9 198.1L300.0 209.0M456.9 331.7L445.0 337.3M378.1 405.0L380.5 399.9M366.8 320.1L355.6 321.6M313.0 259.7L327.3 261.9M264.0 334.9L255.2 340.5M266.2 459.5L273.5 450.5M239.1 432.6L235.2 423.6M520.9 213.4L516.2 205.7M282.5 422.3L295.3 421.4M416.3 175.1L407.6 158.9M359.5 174.9L352.9 159.1M284.8 341.8L275.0 355.5M252.4 290.8L269.8 287.3M286.5 263.7L293.4 247.9M374.3 382.3L374.7 383.9M281.9 216.4L294.1 218.0M355.6 321.6L357.3 334.7M385.0 249.3L376.2 243.5M482.2 458.0L473.4 459.8M465.4 456.0L463.5 443.4M491.6 442.8L489.4 450.7M486.1 444.3L489.4 450.7M489.6 429.9L492.2 423.5M479.9 431.2L473.0 421.5M463.6 441.6L460.2 425.7M474.6 418.3L485.8 420.3M479.9 431.2L489.6 429.9M472.4 453.7L482.2 458.0M463.5 443.4L460.2 425.7M472.4 453.7L486.1 444.3M479.9 431.2L492.8 433.8M473.0 421.5L474.6 418.3M489.4 450.7L481.7 460.0M472.4 453.7L473.4 459.8M482.2 458.0L481.7 460.0M486.1 444.3L482.2 458.0M486.1 444.3L491.6 442.8M489.6 429.9L485.8 420.3M463.6 441.6L463.5 443.4M481.7 460.0L473.4 459.8M485.8 420.3L492.2 423.5M492.2 423.5L492.8 433.8M479.9 431.2L463.6 441.6M473.0 421.5L461.2 414.0M473.4 459.8L465.4 456.0M472.4 453.7L463.5 443.4M482.2 458.0L489.4 450.7M461.2 414.0L460.2 425.7M486.1 444.3L492.8 433.8M489.6 429.9L492.8 433.8M479.9 431.2L486.1 444.3M479.9 431.2L485.8 420.3M472.4 453.7L463.6 441.6M492.8 433.8L491.6 442.8M473.0 421.5L485.8 420.3M473.0 421.5L460.2 425.7M472.4 453.7L465.4 456.0M479.9 431.2L460.2 425.7M461.2 414.0L474.6 418.3M520.4 422.3L520.9 432.9M520.9 432.9L522.3 423.2M510.3 450.9L503.6 440.5M510.0 441.0L510.9 429.9M502.7 415.5L501.9 415.1M511.2 415.6L503.0 409.7M510.0 441.0L502.8 431.7M511.2 415.6L520.4 422.3M510.0 441.0L516.0 446.9M510.9 429.9L502.8 431.7M503.6 440.5L502.8 431.7M511.2 415.6L501.0 422.5M520.4 422.3L522.3 423.2M502.7 415.5L503.0 409.7M502.8 431.7L501.0 422.5M522.3 423.2L521.3 436.3M502.7 415.5L501.0 422.5M510.9 429.9L520.9 432.9M511.2 415.6L510.9 429.9M521.3 436.3L516.0 446.9M510.0 441.0L521.3 436.3M511.2 415.6L502.7 415.5M510.0 441.0L503.6 440.5M510.9 429.9L521.3 436.3M503.0 409.7L515.8 406.3M501.0 422.5L501.9 415.1M503.0 409.7L501.9 415.1M520.9 432.9L521.3 436.3M510.9 429.9L520.4 422.3M510.0 441.0L510.3 450.9M511.2 415.6L515.8 406.3M516.0 446.9L510.3 450.9M510.9 429.9L501.0 422.5M503.6 440.5L501.0 422.5M487.5 457.5L505.0 445.0M470.0 462.0L487.5 457.5" stroke="#0f6ff2" stroke-width="1.05"/><g stroke-width="1.6"><path d="M24.5 121.3L35.8 123.5" stroke="#e0407a"/><path d="M35.8 123.5L48.7 126.1L56.8 134.2" stroke="#c8c43a"/><path d="M46.0 118.0L48.7 126.1" stroke="#c8c43a"/><path d="M56.8 134.2L61.6 137.4" stroke="#7f95e8"/><path d="M66.5 135.8L55.2 143.9L57.7 173.5" stroke="#c8c43a"/><path d="M57.7 173.5L68.0 180.0" stroke="#c8c43a"/><path d="M68.0 180.0L76.1 185.2" stroke="#e0407a"/><path d="M57.7 173.5L50.3 181.0" stroke="#c8c43a"/><path d="M50.3 181.0L42.3 187.4L47.1 198.7" stroke="#7f95e8"/><path d="M47.1 198.7L50.3 210.0" stroke="#c8c43a"/><path d="M16.5 211.0L27.7 212.3" stroke="#e0407a"/><path d="M27.7 212.3L50.3 210.0L61.6 206.8" stroke="#c8c43a"/><path d="M40.6 218.0L50.3 210.0L52.0 219.7L40.6 218.0" stroke="#c8c43a"/><path d="M49.0 218.0L53.0 221.0" stroke="#7f95e8"/><path d="M48.7 221.3L50.3 237.4L52.0 250.3L61.6 255.2" stroke="#c8c43a"/><path d="M61.6 255.2L68.0 260.0" stroke="#e0407a"/><path d="M97.7 91.4L107.8 90.3" stroke="#e0407a"/><path d="M107.8 90.3L119.6 89.7L131.1 104.2L126.4 117.1" stroke="#c8c43a"/><path d="M126.2 85.9L131.1 104.2" stroke="#c8c43a"/><path d="M126.4 117.1L122.3 128.9L128.4 138.5" stroke="#7f95e8"/><path d="M128.4 138.5L135.2 149.5L144.8 150.8" stroke="#c8c43a"/><path d="M144.8 150.8L156.6 151.6" stroke="#e0407a"/><path d="M135.2 149.5L120.7 173.6L113.3 182.3" stroke="#c8c43a"/><path d="M120.7 173.6L127.0 182.9" stroke="#c8c43a"/><path d="M127.0 182.9L133.8 191.9" stroke="#7f95e8"/><path d="M133.8 191.9L128.4 198.8L122.3 202.9L110.5 204.2" stroke="#c8c43a"/><path d="M110.5 204.2L99.6 205.1" stroke="#e0407a"/><path d="M122.3 202.9L133.3 217.4L128.4 198.8" stroke="#c8c43a"/><path d="M133.3 217.4L128.4 228.9" stroke="#c8c43a"/><path d="M128.4 228.9L124.2 240.1L123.5 241.5L130.8 252.0" stroke="#7f95e8"/><path d="M130.8 252.0L137.7 262.5L148.6 263.5" stroke="#c8c43a"/><path d="M148.6 263.5L159.1 264.6" stroke="#e0407a"/><path d="M137.7 262.5L123.5 285.5L115.5 296.6" stroke="#c8c43a"/><path d="M123.5 285.5L129.8 296.0" stroke="#c8c43a"/><path d="M129.8 296.0L136.1 304.3" stroke="#7f95e8"/><path d="M136.1 304.3L130.8 309.6L124.6 315.9L113.0 316.3" stroke="#c8c43a"/><path d="M113.0 316.3L102.6 318.0" stroke="#e0407a"/><path d="M124.6 315.9L136.1 327.4L130.8 309.6" stroke="#c8c43a"/><path d="M136.1 327.4L131.9 341.0" stroke="#c8c43a"/><path d="M131.9 341.0L126.6 353.6" stroke="#7f95e8"/><path d="M439.7 109.7L439.7 124.7" stroke="#7f95e8"/><path d="M439.7 124.7L439.7 136.9L425.6 149.1" stroke="#c8c43a"/><path d="M441.0 139.0L427.0 151.0" stroke="#c8c43a"/><path d="M405.9 139.1L414.4 143.4" stroke="#e0407a"/><path d="M414.4 143.4L425.6 149.1L430.3 161.3" stroke="#c8c43a"/><path d="M430.3 161.3L433.1 165.0L423.8 172.5" stroke="#7f95e8"/><path d="M423.8 172.5L414.4 180.0" stroke="#c8c43a"/><path d="M412.5 175.3L415.3 187.5L417.3 208.4" stroke="#c8c43a"/><path d="M489.4 98.4L496.0 110.6" stroke="#7f95e8"/><path d="M496.0 110.6L501.6 122.8L525.0 124.1" stroke="#c8c43a"/><path d="M501.6 122.8L482.8 142.5L482.8 153.8" stroke="#c8c43a"/><path d="M472.5 137.8L477.0 140.0" stroke="#e0407a"/><path d="M477.0 140.0L482.8 142.5" stroke="#c8c43a"/><path d="M482.8 153.8L482.8 163.1L472.5 176.3" stroke="#7f95e8"/><path d="M472.5 176.3L466.9 184.7L450.0 193.1" stroke="#c8c43a"/><path d="M466.9 184.7L476.3 198.8L483.0 206.9" stroke="#c8c43a"/><path d="M586.3 131.9L613.3 130.2L623.5 128.0" stroke="#c8c43a"/><path d="M623.5 128.0L632.5 125.1" stroke="#7f95e8"/><path d="M613.3 130.2L624.6 161.8" stroke="#c8c43a"/><path d="M624.6 161.8L627.4 170.8" stroke="#e0407a"/><path d="M621.2 148.8L623.5 142.0L626.0 146.0" stroke="#7f95e8"/><path d="M626.0 146.0L627.4 148.8" stroke="#c8c43a"/><path d="M233.7 524.5L252.4 544.4L258.4 542.0" stroke="#c8c43a"/><path d="M258.4 542.0L264.5 540.2" stroke="#7f95e8"/><path d="M252.4 544.4L237.3 569.7L230.1 574.6" stroke="#c8c43a"/><path d="M230.1 574.6L224.1 578.5" stroke="#e0407a"/><path d="M237.3 569.7L237.9 577.6" stroke="#c8c43a"/><path d="M275.7 223.8L286.3 227.4" stroke="#e0407a"/><path d="M286.3 227.4L296.9 230.0L304.0 241.5L308.5 248.6" stroke="#c8c43a"/><path d="M310.2 239.8L306.7 250.4L298.7 261.0" stroke="#c8c43a"/><path d="M298.7 261.0L291.6 271.6L296.1 292.9" stroke="#a7acd8"/><path d="M296.1 292.9L305.8 297.3" stroke="#c8c43a"/><path d="M305.8 297.3L314.6 300.8" stroke="#e0407a"/><path d="M296.1 292.9L286.3 305.3L277.5 314.1L265.1 315.9" stroke="#c8c43a"/><path d="M277.5 314.1L282.4 325.0" stroke="#c8c43a"/><path d="M282.4 325.0L286.1 337.4" stroke="#a7acd8"/><path d="M286.1 337.4L274.9 348.6L262.4 346.9" stroke="#c8c43a"/><path d="M262.4 346.9L251.2 344.4" stroke="#e0407a"/><path d="M274.9 348.6L284.8 368.6L288.6 353.6" stroke="#c8c43a"/><path d="M284.8 368.6L278.6 377.3" stroke="#c8c43a"/><path d="M278.6 377.3L271.9 389.8L277.4 413.4" stroke="#a7acd8"/><path d="M277.4 413.4L287.3 415.9" stroke="#c8c43a"/><path d="M287.3 415.9L296.1 418.4" stroke="#e0407a"/><path d="M277.4 413.4L258.7 434.6L245.0 437.1" stroke="#c8c43a"/><path d="M258.7 434.6L268.6 457.1" stroke="#a7acd8"/><path d="M415.9 175.5L414.5 183.7L417.3 208.4" stroke="#c8c43a"/><path d="M417.3 208.4L402.2 220.7L399.5 235.8" stroke="#a7acd8"/><path d="M399.5 235.8L396.7 249.5L384.4 260.4L374.8 257.7" stroke="#c8c43a"/><path d="M374.8 257.7L363.8 254.9" stroke="#e0407a"/><path d="M384.4 260.4L392.6 279.6" stroke="#c8c43a"/><path d="M392.6 279.6L380.3 290.5" stroke="#a7acd8"/><path d="M380.3 290.5L372.1 298.8" stroke="#c8c43a"/><path d="M374.8 296.0L377.5 320.7L388.5 324.8" stroke="#c8c43a"/><path d="M388.5 324.8L399.5 330.3" stroke="#e0407a"/><path d="M377.5 320.7L361.1 337.1" stroke="#a7acd8"/><path d="M371.2 330.0L358.9 338.2L357.5 362.9" stroke="#a7acd8"/><path d="M357.5 362.9L345.2 379.3L335.6 377.9" stroke="#c8c43a"/><path d="M335.6 377.9L324.7 375.2" stroke="#e0407a"/><path d="M345.2 379.3L352.1 398.5" stroke="#c8c43a"/><path d="M352.1 398.5L341.1 410.8" stroke="#a7acd8"/><path d="M341.1 410.8L332.9 419.0L338.4 443.7L349.3 447.8" stroke="#c8c43a"/><path d="M349.3 447.8L360.3 450.5" stroke="#e0407a"/><path d="M338.4 443.7L321.9 458.8L321.9 483.4" stroke="#a7acd8"/><path d="M321.9 483.4L307.5 501.6L295.5 500.6" stroke="#c8c43a"/><path d="M295.5 500.6L285.4 498.6" stroke="#e0407a"/><path d="M323.6 482.5L315.6 483.5" stroke="#c8c43a"/><path d="M470.9 190.0L483.0 206.9L495.0 209.3" stroke="#c8c43a"/><path d="M495.0 209.3L502.3 212.9" stroke="#e0407a"/><path d="M483.0 206.9L478.1 216.6L486.6 243.1" stroke="#a7acd8"/><path d="M486.6 243.1L509.5 249.2" stroke="#c8c43a"/><path d="M486.6 243.1L469.7 262.5L467.3 272.1" stroke="#c8c43a"/><path d="M469.7 262.5L460.0 260.0" stroke="#e0407a"/><path d="M467.3 272.1L466.1 281.8L449.2 303.5" stroke="#a7acd8"/><path d="M449.2 303.5L432.2 313.2" stroke="#c8c43a"/><path d="M449.2 303.5L462.4 325.3L473.3 332.5" stroke="#c8c43a"/><path d="M473.3 332.5L483.0 336.1" stroke="#e0407a"/><path d="M462.6 330.0L459.0 343.3L465.0 367.4" stroke="#a7acd8"/><path d="M465.0 367.4L489.2 374.7" stroke="#c8c43a"/><path d="M465.0 367.4L444.5 386.8L443.3 400.0" stroke="#c8c43a"/><path d="M444.5 386.8L434.9 381.9" stroke="#e0407a"/><path d="M443.3 400.0L439.7 412.1L424.0 425.4" stroke="#a7acd8"/><path d="M424.0 425.4L405.9 431.4" stroke="#c8c43a"/><path d="M424.0 425.4L436.1 450.8L445.7 454.4" stroke="#c8c43a"/><path d="M445.7 454.4L455.4 458.0" stroke="#e0407a"/><path d="M425.0 209.0L440.0 214.0" stroke="#e0407a"/><path d="M61.0 62.0L62.0 64.5" stroke="#e0407a"/></g><path d="M52.3 89.3L55.8 89.7L53.1 94.4L56.2 94.8M53.5 94.8L62.7 100.2M47.3 100.2L62.7 100.2L64.3 102.1L61.2 118.3M44.2 95.9L48.8 101.3M44.6 100.9L49.2 96.3M60.0 118.3L62.0 122.2M64.3 118.3L60.8 125.3" stroke="#8fbf8a" stroke-width="1.2"/></g><text x="376.5" y="326.3" font-family="Liberation Sans" font-size="10" fill="#f2c4b4" style="white-space:pre">C  /164 ALA U</text><g></g></svg>
<div class="abs" style="left:514px;top:384px;width:2.2px;height:2.5px;background:#1a78f0;"></div>
<!-- right panel -->
<svg class="abs" style="left:745px;top:20px" width="45" height="590" viewBox="745 20 45 590">
 <defs>
  <radialGradient id="sph" cx="0.6" cy="0.35" r="0.7"><stop offset="0" stop-color="#dfe6ff"/><stop offset="0.5" stop-color="#6f86f0"/><stop offset="1" stop-color="#2234c8"/></radialGradient>
  <linearGradient id="side" x1="0" y1="0" x2="0" y2="1"><stop offset="0" stop-color="#a8f098"/><stop offset="1" stop-color="#1c9a1c"/></linearGradient>
 </defs>
 <g fill="none">
  <path d="M764 25h1M767.6 25h1M764 27.8h1M767.6 27.8h1M764 30.6h1M767.6 30.6h1" stroke="#c0c0c0" stroke-width="1.2"/>
  <circle cx="766.7" cy="75.7" r="5.3" fill="url(#sph)" stroke="#1a2a9a" stroke-width="0.8"/>
  <circle cx="765.3" cy="74.2" r="0.9" fill="#e01010"/>
  <circle cx="766.7" cy="92.6" r="5.2" fill="#f6f6f6" stroke="#333" stroke-width="1"/>
  <circle cx="765.4" cy="91.2" r="0.9" fill="#e01010"/>
  <path d="M763.5 105.5h6.5M766.7 105.5v8.5M762.3 110.5q1.3 3.5 4.4 3.5q3.1 0 4.4 -3.5" stroke="#2b6a6a" stroke-width="1.4"/>
  <path d="M762 123.5l3 1.5l-2 3.5l2.5 4" stroke="#223388" stroke-width="1.2"/>
  <path d="M769.5 123l2 2.5l-1.5 3l1.5 3.5l-1.5 1.5" stroke="#18c818" stroke-width="2.2"/>
  <path d="M764 124h3" stroke="#666" stroke-width="1.5"/>
  <path d="M761.5 140.5l2.5 2.5l-2 3l2 3M771.5 140.5l-1.5 3l1 3l-2 3" stroke="#223388" stroke-width="1.1"/>
  <path d="M761.5 140.5l1.5 1.5M762 147l1.5 2M771 141.5l1 2M769.5 148l-0.5 2" stroke="#30c030" stroke-width="1.3"/>
  <path d="M765 141.5h3" stroke="#666" stroke-width="1.5"/>
  <path d="M764.6 158.4l3.8 2.8l-3.8 2.8z" fill="#111"/>
  <path d="M765 174l3.5 0.5l-1.5 4l2 4l-3.5 1.5l-2.5 -2" stroke="#18b818" stroke-width="2.4"/>
  <path d="M766 175l1.5 3.5l-1 3l-2 2" stroke="#223388" stroke-width="1"/>
  <path d="M763.5 191.5l3 3l-2 4l3 3.5M766.5 198.5l4 -1.5M770.5 191.5l0 6" stroke="#1e2a80" stroke-width="1.3"/>
  <path d="M762.5 211.5a4.8 4.8 0 0 1 9 0" stroke="#444" stroke-width="0.9"/>
  <path d="M762.5 216.5l2.5 -2.5l2 0.5l2 -3l1 -0.5M765 214l3 3" stroke="#30b030" stroke-width="1.2"/>
  <circle cx="762" cy="216.5" r="1" fill="#e02020"/><circle cx="771.5" cy="212" r="1" fill="#e02020"/><circle cx="767.8" cy="218.3" r="1" fill="#2040e0"/>
  <path d="M762.3 229a4.8 4.8 0 0 1 9 0M763 231a4 4 0 0 1 7.4 -1" stroke="#333" stroke-width="0.9"/>
  <path d="M762.5 233.5l2.5 -2.5l2 0.5l2 -3l1 -0.5M765 231l3 3" stroke="#30b030" stroke-width="1.2"/>
  <circle cx="762" cy="233.5" r="1" fill="#e02020"/><circle cx="771.5" cy="229.5" r="1" fill="#e02020"/><circle cx="767.8" cy="235.3" r="1" fill="#2040e0"/>
  <path d="M766 243l0.5 3l-4 4M766.5 246l3 3l-1 2.5M766.5 246l4.5 -1l-1 4M767 249.5l1.5 3" stroke="#1e2a90" stroke-width="1.2"/>
  <path d="M766 243l0.5 3M762.5 250l2 -2" stroke="#2ab02a" stroke-width="1.3"/>
  <text x="763.5" y="262" font-size="3.5" font-family="Liberation Sans" fill="#333">Side</text>
  <path d="M761.2 264h11a5.5 5 0 0 1 -11 0z" fill="url(#side)" stroke="#222" stroke-width="0.7"/>
  <path d="M766 277.5l0.5 3.5l-4 3.5M766.5 281l3.5 2M766.5 281l4.5 -1M764 286a3.5 3 0 0 0 6 -1.5" stroke="#1e2a90" stroke-width="1.2"/>
  <path d="M766 277.5l0.5 3.5M762.5 284.5l2 -2" stroke="#2ab02a" stroke-width="1.3"/>
  <path d="M752 296.5h30" stroke="#c8c8c8" stroke-width="1"/>
  <path d="M767 304.5l5.3 9.3h-10.6z" fill="#f2e21a" stroke="#777" stroke-width="0.6"/>
  <path d="M767 307.8l1 1.7h-2zM765.2 311l1 -0.5v1.5h-1.5zM768.8 311l-1 -0.5v1.5h1.5z" fill="#111"/>
  <circle cx="767" cy="326.6" r="5.3" fill="#f0ea10" stroke="#999" stroke-width="0.5"/>
  <path d="M767 326.6l-1.8 -3.8a4.2 4.2 0 0 1 3.6 0zM767 326.6l4.1 0.2a4.2 4.2 0 0 1 -1.9 3.3zM767 326.6l-2.2 3.5a4.2 4.2 0 0 1 -1.9 -3.3z" fill="#111"/>
  <circle cx="767" cy="326.6" r="0.8" fill="#111"/>
  <path d="M761 339.5h5M763.5 337v5" stroke="#1e3aa0" stroke-width="1.5"/>
  <path d="M764.5 346l3 -1.5l3 2.5M767.5 344.5l2 -3" stroke="#28a828" stroke-width="1.2"/>
  <circle cx="763.5" cy="347" r="1" fill="#e02020"/><circle cx="771" cy="347" r="1" fill="#2040e0"/>
  <circle cx="762" cy="356.5" r="0.9" fill="#111"/>
  <path d="M764 357l3.5 4l3.5 -4M767.5 361l-3 4.5M767.5 361l3 3.5" stroke="#1e2a90" stroke-width="1.3"/>
  <rect x="762" y="374" width="10" height="10" fill="#f6f0e0" stroke="#c8a060" stroke-width="1.4"/>
  <path d="M764.5 379h5M767 376.5v5" stroke="#222" stroke-width="1.4"/>
  <path d="M765.5 391.5h3v4h2.5v2h-8v-2h2.5z" fill="#6aa83a"/>
  <rect x="762.5" y="397.5" width="9" height="3" fill="#e8d888" stroke="#999" stroke-width="0.5"/>
  <rect x="761.5" y="400.5" width="11" height="1.5" fill="#555"/>
  <path d="M762.5 409.5h9l-1 8.5h-7z" fill="#888" stroke="#333" stroke-width="0.9"/>
  <ellipse cx="767" cy="409.5" rx="4.5" ry="1.6" fill="#aaa" stroke="#333" stroke-width="0.8"/>
  <path d="M763.5 413h7M763.8 415.5h6.4" stroke="#444" stroke-width="0.6"/>
  <circle cx="766.75" cy="430.9" r="5.1" fill="#f6f6f6" stroke="#a0a0a0" stroke-width="1.1"/>
  <path d="M764.9 429.4l2.4 0.6q0.9 0.4 0.5 1.4l-0.8 2.1" stroke="#151515" stroke-width="1.5"/>
  <circle cx="766.75" cy="448.2" r="5.1" fill="#f6f6f6" stroke="#a0a0a0" stroke-width="1.1"/>
  <path d="M766.3 445.8l-1 2.2q-0.3 1.2 0.7 1.7l1.9 0.8" stroke="#151515" stroke-width="1.5"/>
  <path d="M752 461.6h30" stroke="#c8c8c8" stroke-width="1"/>
  <rect x="761.2" y="469.2" width="11" height="4" fill="#3a9ad8"/>
  <rect x="761.2" y="473.2" width="11" height="4" fill="#e02040"/>
  <rect x="761.2" y="477.2" width="11" height="4" fill="#30a850"/>
  <circle cx="766.7" cy="475.2" r="1" fill="#f4c0c8"/>
  <path d="M752 489.4h30" stroke="#c8c8c8" stroke-width="1"/>
  <path d="M759.5 499.2l8.5 4.4l-8.5 4.4z" fill="#f6f6f6" stroke="#a8a8a8" stroke-width="0.9"/>
  <path d="M751 511.6h31" stroke="#c8c8c8" stroke-width="1"/>
  <path d="M750 598.5h26" stroke="#d8d8d8" stroke-width="1"/>
  <path d="M778 593h10v10h-10z" fill="#fafafa"/>
  <path d="M780 602l7 -7M783 602l4 -4" stroke="#9a9a9a" stroke-width="0.9"/>
 </g>
</svg>
<div class="gbtn" style="left:751px;top:35px;width:32px;height:15px;"></div>
<div class="txt" style="left:757px;top:36px;color:#2a2a2a;letter-spacing:0.25px;">R/RC</div>
<div class="gbtn" style="left:751px;top:51.5px;width:32px;height:15px;"></div>
<div class="txt" style="left:757.8px;top:52.7px;color:#2a2a2a;letter-spacing:0.3px;">Map</div>
<div class="abs" style="left:733px;top:591.3px;width:11px;height:11.4px;border-radius:1.5px;box-sizing:border-box;border:1px solid #6a9ad8;background:linear-gradient(#d4e0f4,#a8c4ec 40%,#4a98ea 50%,#8ed0fa 80%,#b6ecff);"></div>
<!-- status -->
<div class="txt" style="left:13px;top:590.4px;letter-spacing:0.46px;color:#505050;">(mol. no: 0)  C  /1/U/164 ALA occ:  1.00 bf:  0.00 ele:  C pos: (29.26,39.74,25.02)</div>
</body></html>
